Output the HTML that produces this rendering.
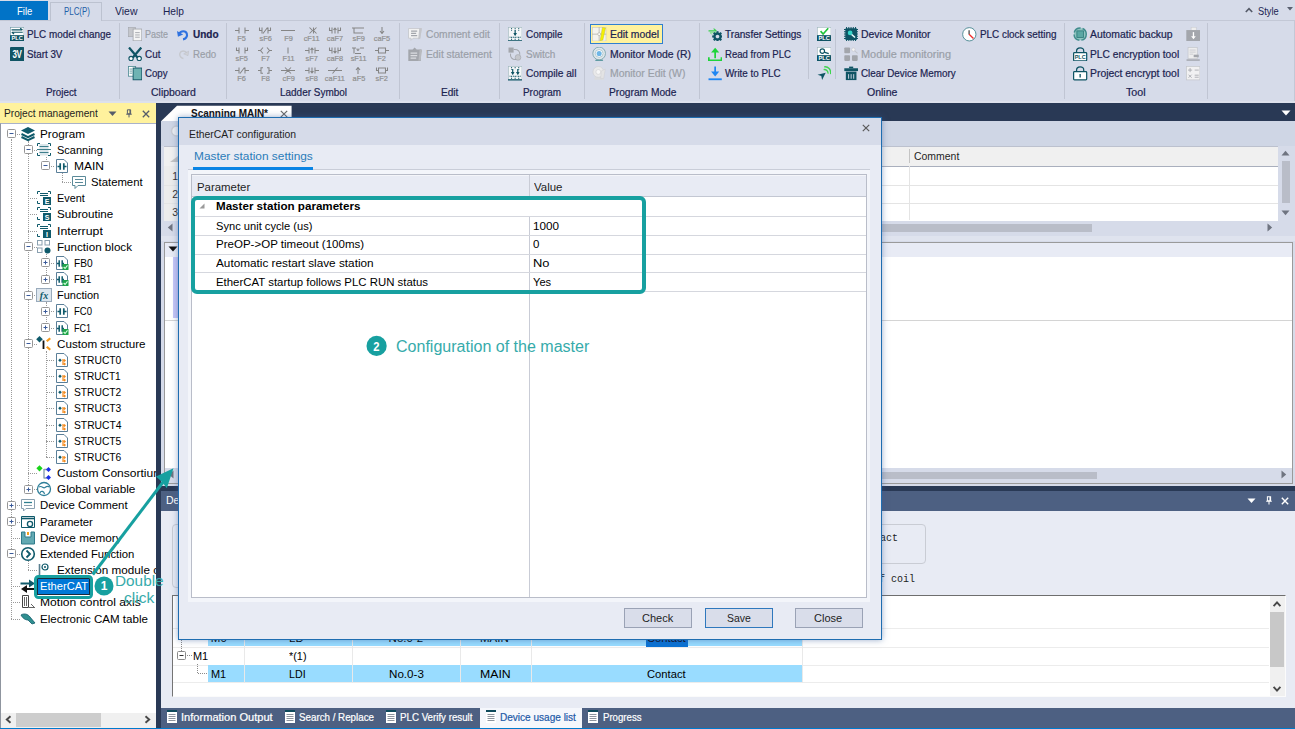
<!DOCTYPE html>
<html><head><meta charset="utf-8"><title>EtherCAT configuration</title>
<style>
html,body{margin:0;padding:0;}
body{width:1295px;height:729px;position:relative;overflow:hidden;background:#d6dbe9;font-family:'Liberation Sans', sans-serif;}
div,span.t,svg{position:absolute;box-sizing:border-box;}
span.t{white-space:pre;}
</style></head><body>
<div style="left:0px;top:0px;width:1295px;height:103px;background:#d6dbe9;"></div>
<div style="left:0px;top:20px;width:1295px;height:1px;background:#c3c8d6;"></div>
<div style="left:0px;top:1px;width:48px;height:19px;background:#0173c7;"></div>
<div style="left:50px;top:2px;width:52px;height:19px;background:#d6dbe9;border:1px solid #bcc2d0;border-bottom:none;"></div>
<span class="t" style="left:16.70px;top:5px;line-height:14px;font-family:'Liberation Sans', sans-serif;font-size:10.3px;font-weight:400;color:#ffffff;transform:scaleX(0.9281);transform-origin:0 50%;">File</span>
<span class="t" style="left:63.60px;top:5px;line-height:14px;font-family:'Liberation Sans', sans-serif;font-size:10.3px;font-weight:400;color:#1f5fa8;transform:scaleX(0.7671);transform-origin:0 50%;">PLC(P)</span>
<span class="t" style="left:115.00px;top:5px;line-height:14px;font-family:'Liberation Sans', sans-serif;font-size:10.3px;font-weight:400;color:#1b2350;transform:scaleX(1.0162);transform-origin:0 50%;">View</span>
<span class="t" style="left:163.00px;top:5px;line-height:14px;font-family:'Liberation Sans', sans-serif;font-size:10.3px;font-weight:400;color:#1b2350;transform:scaleX(0.9912);transform-origin:0 50%;">Help</span>
<span class="t" style="left:1258.40px;top:5px;line-height:14px;font-family:'Liberation Sans', sans-serif;font-size:10.3px;font-weight:400;color:#1b2350;transform:scaleX(0.8993);transform-origin:0 50%;">Style</span>
<svg style="left:1244px;top:5.5px" width="10" height="8" viewBox="0 0 10 8"><path d="M1.8 6 L5 2.6 L8.2 6" fill="none" stroke="#555a68" stroke-width="1.6"/></svg>
<svg style="left:1286.5px;top:7px" width="6" height="4" viewBox="0 0 6 4"><path d="M0 0H6L3 3.5Z" fill="#5a6070"/></svg>
<div style="left:1294px;top:20px;width:1px;height:83px;background:#c3c8d6;"></div>
<div style="left:0px;top:100.6px;width:1295px;height:2.4px;background:#dde1ec;"></div>
<div style="left:119px;top:23px;width:1px;height:76px;background:#c0c5d3;"></div>
<div style="left:226px;top:23px;width:1px;height:76px;background:#c0c5d3;"></div>
<div style="left:399px;top:23px;width:1px;height:76px;background:#c0c5d3;"></div>
<div style="left:499px;top:23px;width:1px;height:76px;background:#c0c5d3;"></div>
<div style="left:584px;top:23px;width:1px;height:76px;background:#c0c5d3;"></div>
<div style="left:699px;top:23px;width:1px;height:76px;background:#c0c5d3;"></div>
<div style="left:1064px;top:23px;width:1px;height:76px;background:#c0c5d3;"></div>
<div style="left:1207px;top:23px;width:1px;height:76px;background:#c0c5d3;"></div>
<div style="left:808px;top:29px;width:1px;height:50px;background:#c0c5d3;"></div>
<div style="left:835px;top:29px;width:1px;height:50px;background:#c0c5d3;"></div>
<span class="t" style="left:27.30px;top:28px;line-height:14px;font-family:'Liberation Sans', sans-serif;font-size:10.3px;font-weight:400;color:#1b2350;transform:scaleX(0.9590);transform-origin:0 50%;-webkit-text-stroke:0.2px;">PLC model change</span>
<span class="t" style="left:27.30px;top:48px;line-height:14px;font-family:'Liberation Sans', sans-serif;font-size:10.3px;font-weight:400;color:#1b2350;transform:scaleX(0.9515);transform-origin:0 50%;-webkit-text-stroke:0.2px;">Start 3V</span>
<span class="t" style="left:145.20px;top:28px;line-height:14px;font-family:'Liberation Sans', sans-serif;font-size:10.3px;font-weight:400;color:#9a9fa8;transform:scaleX(0.8731);transform-origin:0 50%;-webkit-text-stroke:0.2px;">Paste</span>
<span class="t" style="left:192.60px;top:28px;line-height:14px;font-family:'Liberation Sans', sans-serif;font-size:10.3px;font-weight:700;color:#1b2350;transform:scaleX(0.9729);transform-origin:0 50%;-webkit-text-stroke:0.2px;">Undo</span>
<span class="t" style="left:145.20px;top:48px;line-height:14px;font-family:'Liberation Sans', sans-serif;font-size:10.3px;font-weight:400;color:#1b2350;transform:scaleX(0.9606);transform-origin:0 50%;-webkit-text-stroke:0.2px;">Cut</span>
<span class="t" style="left:192.60px;top:48px;line-height:14px;font-family:'Liberation Sans', sans-serif;font-size:10.3px;font-weight:400;color:#9a9fa8;transform:scaleX(0.9421);transform-origin:0 50%;-webkit-text-stroke:0.2px;">Redo</span>
<span class="t" style="left:145.20px;top:67px;line-height:14px;font-family:'Liberation Sans', sans-serif;font-size:10.3px;font-weight:400;color:#1b2350;transform:scaleX(0.9398);transform-origin:0 50%;-webkit-text-stroke:0.2px;">Copy</span>
<span class="t" style="left:425.60px;top:28px;line-height:14px;font-family:'Liberation Sans', sans-serif;font-size:10.3px;font-weight:400;color:#9a9fa8;transform:scaleX(0.9952);transform-origin:0 50%;-webkit-text-stroke:0.2px;">Comment edit</span>
<span class="t" style="left:425.60px;top:48px;line-height:14px;font-family:'Liberation Sans', sans-serif;font-size:10.3px;font-weight:400;color:#9a9fa8;transform:scaleX(0.9996);transform-origin:0 50%;-webkit-text-stroke:0.2px;">Edit statement</span>
<span class="t" style="left:525.60px;top:28px;line-height:14px;font-family:'Liberation Sans', sans-serif;font-size:10.3px;font-weight:400;color:#1b2350;transform:scaleX(0.9687);transform-origin:0 50%;-webkit-text-stroke:0.2px;">Compile</span>
<span class="t" style="left:525.60px;top:48px;line-height:14px;font-family:'Liberation Sans', sans-serif;font-size:10.3px;font-weight:400;color:#9a9fa8;transform:scaleX(0.9694);transform-origin:0 50%;-webkit-text-stroke:0.2px;">Switch</span>
<span class="t" style="left:525.60px;top:67px;line-height:14px;font-family:'Liberation Sans', sans-serif;font-size:10.3px;font-weight:400;color:#1b2350;transform:scaleX(0.9894);transform-origin:0 50%;-webkit-text-stroke:0.2px;">Compile all</span>
<div style="left:590px;top:24px;width:73px;height:20px;background:#fff29d;border:1px solid #2f7fd0;"></div>
<span class="t" style="left:610.00px;top:28px;line-height:14px;font-family:'Liberation Sans', sans-serif;font-size:10.3px;font-weight:400;color:#1b2350;transform:scaleX(1.0071);transform-origin:0 50%;-webkit-text-stroke:0.2px;">Edit model</span>
<span class="t" style="left:610.00px;top:48px;line-height:14px;font-family:'Liberation Sans', sans-serif;font-size:10.3px;font-weight:400;color:#1b2350;transform:scaleX(1.0111);transform-origin:0 50%;-webkit-text-stroke:0.2px;">Monitor Mode (R)</span>
<span class="t" style="left:610.00px;top:67px;line-height:14px;font-family:'Liberation Sans', sans-serif;font-size:10.3px;font-weight:400;color:#9a9fa8;transform:scaleX(1.0136);transform-origin:0 50%;-webkit-text-stroke:0.2px;">Monitor Edit (W)</span>
<span class="t" style="left:725.00px;top:28px;line-height:14px;font-family:'Liberation Sans', sans-serif;font-size:10.3px;font-weight:400;color:#1b2350;transform:scaleX(0.9791);transform-origin:0 50%;-webkit-text-stroke:0.2px;">Transfer Settings</span>
<span class="t" style="left:725.00px;top:48px;line-height:14px;font-family:'Liberation Sans', sans-serif;font-size:10.3px;font-weight:400;color:#1b2350;transform:scaleX(0.9300);transform-origin:0 50%;-webkit-text-stroke:0.2px;">Read from PLC</span>
<span class="t" style="left:725.00px;top:67px;line-height:14px;font-family:'Liberation Sans', sans-serif;font-size:10.3px;font-weight:400;color:#1b2350;transform:scaleX(0.9555);transform-origin:0 50%;-webkit-text-stroke:0.2px;">Write to PLC</span>
<span class="t" style="left:861.00px;top:28px;line-height:14px;font-family:'Liberation Sans', sans-serif;font-size:10.3px;font-weight:400;color:#1b2350;transform:scaleX(1.0135);transform-origin:0 50%;-webkit-text-stroke:0.2px;">Device Monitor</span>
<span class="t" style="left:861.00px;top:48px;line-height:14px;font-family:'Liberation Sans', sans-serif;font-size:10.3px;font-weight:400;color:#9a9fa8;transform:scaleX(1.0623);transform-origin:0 50%;-webkit-text-stroke:0.2px;">Module monitoring</span>
<span class="t" style="left:861.00px;top:67px;line-height:14px;font-family:'Liberation Sans', sans-serif;font-size:10.3px;font-weight:400;color:#1b2350;transform:scaleX(0.9556);transform-origin:0 50%;-webkit-text-stroke:0.2px;">Clear Device Memory</span>
<span class="t" style="left:979.60px;top:28px;line-height:14px;font-family:'Liberation Sans', sans-serif;font-size:10.3px;font-weight:400;color:#1b2350;transform:scaleX(0.9603);transform-origin:0 50%;-webkit-text-stroke:0.2px;">PLC clock setting</span>
<span class="t" style="left:1090.40px;top:28px;line-height:14px;font-family:'Liberation Sans', sans-serif;font-size:10.3px;font-weight:400;color:#1b2350;transform:scaleX(1.0090);transform-origin:0 50%;-webkit-text-stroke:0.2px;">Automatic backup</span>
<span class="t" style="left:1090.40px;top:48px;line-height:14px;font-family:'Liberation Sans', sans-serif;font-size:10.3px;font-weight:400;color:#1b2350;transform:scaleX(0.9925);transform-origin:0 50%;-webkit-text-stroke:0.2px;">PLC encryption tool</span>
<span class="t" style="left:1090.40px;top:67px;line-height:14px;font-family:'Liberation Sans', sans-serif;font-size:10.3px;font-weight:400;color:#1b2350;transform:scaleX(1.0120);transform-origin:0 50%;-webkit-text-stroke:0.2px;">Project encrypt tool</span>
<span class="t" style="left:45.50px;top:86px;line-height:14px;font-family:'Liberation Sans', sans-serif;font-size:10.3px;font-weight:400;color:#1b2350;transform:scaleX(0.9544);transform-origin:0 50%;-webkit-text-stroke:0.2px;">Project</span>
<span class="t" style="left:150.60px;top:86px;line-height:14px;font-family:'Liberation Sans', sans-serif;font-size:10.3px;font-weight:400;color:#1b2350;transform:scaleX(1.0164);transform-origin:0 50%;-webkit-text-stroke:0.2px;">Clipboard</span>
<span class="t" style="left:279.60px;top:86px;line-height:14px;font-family:'Liberation Sans', sans-serif;font-size:10.3px;font-weight:400;color:#1b2350;transform:scaleX(0.9673);transform-origin:0 50%;-webkit-text-stroke:0.2px;">Ladder Symbol</span>
<span class="t" style="left:441.00px;top:86px;line-height:14px;font-family:'Liberation Sans', sans-serif;font-size:10.3px;font-weight:400;color:#1b2350;transform:scaleX(0.9803);transform-origin:0 50%;-webkit-text-stroke:0.2px;">Edit</span>
<span class="t" style="left:522.60px;top:86px;line-height:14px;font-family:'Liberation Sans', sans-serif;font-size:10.3px;font-weight:400;color:#1b2350;transform:scaleX(0.9624);transform-origin:0 50%;-webkit-text-stroke:0.2px;">Program</span>
<span class="t" style="left:608.60px;top:86px;line-height:14px;font-family:'Liberation Sans', sans-serif;font-size:10.3px;font-weight:400;color:#1b2350;transform:scaleX(0.9896);transform-origin:0 50%;-webkit-text-stroke:0.2px;">Program Mode</span>
<span class="t" style="left:866.60px;top:86px;line-height:14px;font-family:'Liberation Sans', sans-serif;font-size:10.3px;font-weight:400;color:#1b2350;transform:scaleX(1.0213);transform-origin:0 50%;-webkit-text-stroke:0.2px;">Online</span>
<span class="t" style="left:1126.00px;top:86px;line-height:14px;font-family:'Liberation Sans', sans-serif;font-size:10.3px;font-weight:400;color:#1b2350;transform:scaleX(1.0376);transform-origin:0 50%;-webkit-text-stroke:0.2px;">Tool</span>
<svg style="left:10px;top:27.15px" width="14.3" height="14.3" viewBox="0 0 14 14"><rect x="0.3" y="0.3" width="13.4" height="13.4" fill="#fff" stroke="#6d97a3" stroke-width="0.6"/><path d="M1.5 2.8H12M10 1.2L12.3 2.8 M12.5 5.2H2M4 6.8L1.7 5.2" fill="none" stroke="#0f5464" stroke-width="1.1"/><rect x="0" y="8" width="14" height="6" fill="#0f5464"/><text x="7" y="13.2" font-size="5.6" font-weight="700" fill="#fff" text-anchor="middle" font-family="Liberation Sans, sans-serif">PLC</text></svg>
<svg style="left:10px;top:46.75px" width="14.3" height="14.3" viewBox="0 0 14 14"><rect x="0" y="0" width="14" height="14" rx="1" fill="#0f5464"/><text x="8.6" y="9.6" font-size="9.8" font-weight="700" fill="#fff" text-anchor="middle" letter-spacing="-0.6" transform="scale(0.8,1.12)" font-family="Liberation Sans, sans-serif">3V</text></svg>
<svg style="left:128px;top:27.15px" width="14.3" height="14.3" viewBox="0 0 14 14"><rect x="0.5" y="0.5" width="7" height="9" fill="#c4c6cb" stroke="#a3a6ac" stroke-width="0.6"/><rect x="5" y="2" width="8.5" height="11.5" fill="#f4f4f4" stroke="#a3a6ac" stroke-width="0.8"/><path d="M7 5.5H11.5M7 7.8H11.5M7 10H11.5" stroke="#a3a6ac" stroke-width="0.9"/></svg>
<svg style="left:128px;top:46.75px" width="14.3" height="14.3" viewBox="0 0 14 14"><path d="M1 0.5L9.5 10.5M13 0.5L4.5 10.5" stroke="#0f5464" stroke-width="2.2" fill="none"/><circle cx="3" cy="11.3" r="2.1" fill="#fff" stroke="#0f5464" stroke-width="1.1"/><circle cx="11" cy="11.3" r="2.1" fill="#fff" stroke="#0f5464" stroke-width="1.1"/></svg>
<svg style="left:128px;top:66.45px" width="14.3" height="14.3" viewBox="0 0 14 14"><rect x="0.5" y="0.5" width="7" height="9.5" fill="#fff" stroke="#4d8a93" stroke-width="0.8"/><path d="M1.5 3H4M1.5 5H4M1.5 7H4" stroke="#4d8a93" stroke-width="0.8"/><rect x="5" y="2" width="8.5" height="11.5" fill="#6fb3b3" stroke="#0f5464" stroke-width="0.9"/></svg>
<svg style="left:177px;top:27.80px" width="13" height="13" viewBox="0 0 14 14"><path d="M2.2 6.3C4.5 2.5 9.5 2.8 10.6 6.2C11.6 9.3 9.2 11.8 6.5 12.2" fill="none" stroke="#2f72e0" stroke-width="2.3"/><path d="M0 3.2L1 9.4L6.6 7Z" fill="#2f72e0"/></svg>
<svg style="left:177px;top:47.90px" width="12" height="12" viewBox="0 0 14 14"><path d="M11.8 6.3C9.5 2.5 4.5 2.8 3.4 6.2C2.4 9.3 4.8 11.8 7.5 12.2" fill="none" stroke="#c6c8ce" stroke-width="1.6"/><path d="M13.8 3.6L12.8 9L7.8 6.9Z" fill="#d0d2d7" stroke="#b9bbc2" stroke-width="0.5"/></svg>
<svg style="left:408px;top:27.15px" width="14.3" height="14.3" viewBox="0 0 14 14"><path d="M0.5 1.5H13L11.5 11H5L3 13V11H0.5Z" fill="#f3f3f3" stroke="#c4c6cb" stroke-width="0.8"/><path d="M3 4H9M3 6.2H8M3 8.4H9" stroke="#a3a6ac" stroke-width="1.2"/><path d="M11 1L13.6 1.3L12 11.5L10 12Z" fill="#c4c6cb"/></svg>
<svg style="left:408px;top:46.75px" width="14.3" height="14.3" viewBox="0 0 14 14"><path d="M0.3 2.5H4.5L6.5 0.5L8.5 2.5H12.5V13.7H0.3Z" fill="#a3a6ac"/><path d="M2.5 6H9M2.5 8.5H9M2.5 11H8" stroke="#dcdde1" stroke-width="1.2"/><path d="M11.5 2L14 2.4L12.2 13L10.2 13.5Z" fill="#b8babf"/></svg>
<svg style="left:508px;top:27.15px" width="14.3" height="14.3" viewBox="0 0 14 14"><rect x="0.3" y="0.3" width="13.4" height="13" fill="#f4f6f8" stroke="#9fb7bd" stroke-width="0.6"/><path d="M0 13.6H14" stroke="#0f5464" stroke-width="1.2"/><path d="M3.5 1V4M7 1V3M10.5 1V4M3.5 10V13M7 10V13M10.5 10V13M1.5 10H12.5" stroke="#0f5464" stroke-width="0.9" stroke-dasharray="1 0.7"/><path d="M7 3V8" stroke="#0f5464" stroke-width="1.2"/><path d="M5.2 5.8H8.8L7 8.8Z" fill="#0f5464"/></svg>
<svg style="left:508px;top:66.45px" width="14.3" height="14.3" viewBox="0 0 14 14"><rect x="0.3" y="0.3" width="13.4" height="13" fill="#f4f6f8" stroke="#9fb7bd" stroke-width="0.6"/><path d="M0 13.6H14" stroke="#0f5464" stroke-width="1.2"/><path d="M3.5 1V4M7 1V3M10.5 1V4M3.5 10V13M7 10V13M10.5 10V13M1.5 10H12.5" stroke="#0f5464" stroke-width="0.9" stroke-dasharray="1 0.7"/><path d="M4.6 3V8" stroke="#0f5464" stroke-width="1.2"/><path d="M2.8 5.8H6.3999999999999995L4.6 8.8Z" fill="#0f5464"/><path d="M9.6 3V8" stroke="#0f5464" stroke-width="1.2"/><path d="M7.8 5.8H11.4L9.6 8.8Z" fill="#0f5464"/></svg>
<svg style="left:508px;top:46.75px" width="14.3" height="14.3" viewBox="0 0 14 14"><rect x="0.5" y="0.5" width="5" height="5" fill="#a3a6ac"/><circle cx="9.8" cy="10.2" r="2.8" fill="#c4c6cb" stroke="#a3a6ac" stroke-width="0.6"/><path d="M5.5 2.5C10 2 12 4.5 11.5 7.5M8 12.3C3.5 12.5 2 9.5 2.5 6.5" fill="none" stroke="#a3a6ac" stroke-width="1"/></svg>
<svg style="left:592.4px;top:27.15px" width="14.3" height="14.3" viewBox="0 0 14 14"><rect x="0.3" y="0.3" width="13.4" height="13.4" fill="#f3f3ee" stroke="#c9c9c0" stroke-width="0.6"/><path d="M0 7H14M7 0V14" stroke="#b5b5ac" stroke-width="0.8"/><circle cx="7" cy="7" r="1.4" fill="#fff" stroke="#a9a9a0" stroke-width="0.6"/><path d="M10.2 0.5L13.2 1L10.6 12.8L8 13.4Z" fill="#f5f200" stroke="#c9c21e" stroke-width="0.5"/></svg>
<svg style="left:592.4px;top:46.75px" width="14.3" height="14.3" viewBox="0 0 14 14"><path d="M3 13.6H11L9.5 11H4.5Z" fill="#5f9aa3"/><circle cx="7" cy="6.3" r="6.2" fill="#dfe6ea" stroke="#7fa7af" stroke-width="0.9"/><circle cx="7" cy="6.3" r="3.8" fill="#fff" stroke="#9db9c0" stroke-width="0.7"/><circle cx="7" cy="6.3" r="2.5" fill="#6fb6e6"/></svg>
<svg style="left:592.4px;top:66.45px" width="14.3" height="14.3" viewBox="0 0 14 14"><path d="M2 13.5H12L11 10H3Z" fill="#dadbdd"/><circle cx="6.2" cy="5.8" r="5.3" fill="#e9e9ea" stroke="#d2d3d6" stroke-width="0.8"/><circle cx="6.2" cy="5.8" r="2.4" fill="#f7f7f7" stroke="#cfd0d3" stroke-width="0.6"/><path d="M9 5L13 3L11.5 12L8.5 12.5Z" fill="#e3e3e4" stroke="#cdced1" stroke-width="0.5"/></svg>
<svg style="left:708px;top:27.15px" width="14.3" height="14.3" viewBox="0 0 14 14"><path d="M0.5 3.8H8M5.5 1.6L8.3 3.8" fill="none" stroke="#38d04a" stroke-width="1.1"/><path d="M2 5.5H9M4.3 7.5L1.8 5.5" fill="none" stroke="#7fe08a" stroke-width="0.9"/><g transform="translate(9.3,9.3)"><circle r="2.9" fill="none" stroke="#0f5464" stroke-width="2.2"/><rect x="-1" y="-5.2" width="2" height="2.4" fill="#0f5464" transform="rotate(0)"/><rect x="-1" y="-5.2" width="2" height="2.4" fill="#0f5464" transform="rotate(45)"/><rect x="-1" y="-5.2" width="2" height="2.4" fill="#0f5464" transform="rotate(90)"/><rect x="-1" y="-5.2" width="2" height="2.4" fill="#0f5464" transform="rotate(135)"/><rect x="-1" y="-5.2" width="2" height="2.4" fill="#0f5464" transform="rotate(180)"/><rect x="-1" y="-5.2" width="2" height="2.4" fill="#0f5464" transform="rotate(225)"/><rect x="-1" y="-5.2" width="2" height="2.4" fill="#0f5464" transform="rotate(270)"/><rect x="-1" y="-5.2" width="2" height="2.4" fill="#0f5464" transform="rotate(315)"/></g></svg>
<svg style="left:708px;top:46.75px" width="14.3" height="14.3" viewBox="0 0 14 14"><path d="M7 11V3" stroke="#1ed43a" stroke-width="1.7"/><path d="M3 5.5L7 0.8L11 5.5Z" fill="#1ed43a"/><path d="M0.8 10V13H13.2V10" fill="none" stroke="#1ed43a" stroke-width="1.7"/></svg>
<svg style="left:708px;top:66.45px" width="14.3" height="14.3" viewBox="0 0 14 14"><path d="M7 0.5V8" stroke="#1f86f2" stroke-width="1.7"/><path d="M3 5.5L7 10.3L11 5.5Z" fill="#1f86f2"/><path d="M0.5 13H13.5" fill="none" stroke="#1f86f2" stroke-width="1.8"/></svg>
<svg style="left:816.5px;top:27.15px" width="14.3" height="14.3" viewBox="0 0 14 14"><rect x="0.3" y="0.3" width="13.4" height="13.4" fill="#fff" stroke="#9fb7bd" stroke-width="0.6"/><path d="M3.5 4L6 6.8L11 1.2" fill="none" stroke="#1fc43a" stroke-width="1.6"/><rect x="0" y="8" width="14" height="6" fill="#0f5464"/><text x="7" y="13.2" font-size="5.6" font-weight="700" fill="#fff" text-anchor="middle" font-family="Liberation Sans, sans-serif">PLC</text></svg>
<svg style="left:816.5px;top:46.75px" width="14.3" height="14.3" viewBox="0 0 14 14"><rect x="0.3" y="0.3" width="13.4" height="13.4" fill="#fff" stroke="#9fb7bd" stroke-width="0.6"/><circle cx="5.2" cy="4" r="2.2" fill="none" stroke="#0f5464" stroke-width="1.1"/><path d="M7 5L11.5 6.5" stroke="#0f5464" stroke-width="1.3"/><rect x="0" y="8" width="14" height="6" fill="#0f5464"/><text x="7" y="13.2" font-size="5.6" font-weight="700" fill="#fff" text-anchor="middle" font-family="Liberation Sans, sans-serif">PLC</text></svg>
<svg style="left:816.5px;top:66.45px" width="14.3" height="14.3" viewBox="0 0 14 14"><path d="M0.5 8.5L8.5 6.5L5 13.8L4.2 9.8Z" fill="#0f5464"/><path d="M6.5 3.5C9 3 11 5 10.8 7.5M7 0.8C11 0.2 14 3.5 13.3 8" fill="none" stroke="#3fd44f" stroke-width="1.3"/></svg>
<svg style="left:843.6px;top:27.15px" width="14.3" height="14.3" viewBox="0 0 14 14"><path d="M2.5 0V14M0 2.5H14" stroke="#0f5464" stroke-width="1"/><path d="M4.7 0V14M0 4.7H14" stroke="#0f5464" stroke-width="1"/><path d="M6.9 0V14M0 6.9H14" stroke="#0f5464" stroke-width="1"/><path d="M9.1 0V14M0 9.1H14" stroke="#0f5464" stroke-width="1"/><path d="M11.3 0V14M0 11.3H14" stroke="#0f5464" stroke-width="1"/><rect x="1.3" y="1.3" width="11.4" height="11.4" rx="1" fill="#0f5464"/><circle cx="6" cy="5.8" r="2.3" fill="#37d6c9"/><path d="M7.5 7.3L10.8 10.3" stroke="#e8ffff" stroke-width="1.5"/></svg>
<svg style="left:843.6px;top:46.75px" width="14.3" height="14.3" viewBox="0 0 14 14"><rect x="0.3" y="0.5" width="5.6" height="5.6" rx="0.8" fill="#a3a6ac"/><rect x="0.3" y="8" width="5.6" height="5.6" rx="0.8" fill="#a3a6ac"/><rect x="7.8" y="8" width="5.6" height="5.6" rx="0.8" fill="#a3a6ac"/><circle cx="9.2" cy="2.5" r="1.7" fill="#f4f4f4" stroke="#c4c6cb" stroke-width="0.6"/><path d="M10.5 3.8L13.3 6.3" stroke="#c4c6cb" stroke-width="1"/></svg>
<svg style="left:843.6px;top:66.45px" width="14.3" height="14.3" viewBox="0 0 14 14"><path d="M5 0.6H9V2.2H5Z" fill="#0f5464"/><path d="M0.3 2.2H13.7V5H0.3Z" fill="#0f5464"/><path d="M1.8 5.5H12.2V13.8H1.8Z" fill="#0f5464"/><path d="M4.5 8V12.5M7 8V12.5M9.5 8V12.5" stroke="#d6dbe9" stroke-width="0.9"/></svg>
<svg style="left:962px;top:27.00px" width="14.6" height="14.6" viewBox="0 0 14 14"><circle cx="7" cy="7" r="6.4" fill="#fff" stroke="#4d8a93" stroke-width="0.9"/><path d="M6.8 3V7.2" stroke="#333" stroke-width="1.1"/><path d="M6.8 7L11 11" stroke="#f02a2a" stroke-width="1.3"/></svg>
<svg style="left:1073.4px;top:27.15px" width="14.3" height="14.3" viewBox="0 0 14 14"><circle cx="7" cy="7" r="6" fill="#8fc4c0" stroke="#3f8b8b" stroke-width="1.4" stroke-dasharray="8 2"/><rect x="3.8" y="3.8" width="6.4" height="6.4" fill="#5aa7a3" stroke="#2f7a7a" stroke-width="0.8"/></svg>
<svg style="left:1073.4px;top:46.75px" width="14.3" height="14.3" viewBox="0 0 14 14"><path d="M3.5 5.5V3.8C3.5 0 10.5 0 10.5 3.8V5.5" fill="none" stroke="#0f5464" stroke-width="1.2"/><rect x="0.6" y="5.5" width="12.8" height="8" rx="0.8" fill="#fff" stroke="#0f5464" stroke-width="1.2"/><text x="7" y="11.8" font-size="5.4" font-weight="700" fill="#0f5464" text-anchor="middle" font-family="Liberation Sans, sans-serif">PLC</text></svg>
<svg style="left:1073.4px;top:66.45px" width="14.3" height="14.3" viewBox="0 0 14 14"><path d="M3.5 5.5V3.8C3.5 0 10.5 0 10.5 3.8V5.5" fill="none" stroke="#0f5464" stroke-width="1.2"/><rect x="0.6" y="5.5" width="12.8" height="8" rx="0.8" fill="#fff" stroke="#0f5464" stroke-width="1.2"/><path d="M7 7.8V11.3" stroke="#0f5464" stroke-width="1.3"/></svg>
<svg style="left:1186px;top:27.15px" width="14.3" height="14.3" viewBox="0 0 14 14"><rect x="5" y="0.2" width="5" height="3" fill="#eee" stroke="#c4c6cb" stroke-width="0.5"/><rect x="0.3" y="3" width="13.4" height="10.8" fill="#a3a6ac"/><path d="M7.3 5V10" stroke="#fff" stroke-width="1.3"/><path d="M5 9L7.3 12L9.6 9Z" fill="#fff"/></svg>
<svg style="left:1186px;top:46.75px" width="14.3" height="14.3" viewBox="0 0 14 14"><rect x="2" y="0.5" width="9" height="11" fill="#ededee" stroke="#c4c6cb" stroke-width="0.7"/><path d="M3.5 3H9.5M3.5 5H9.5M3.5 7H7" stroke="#c4c6cb" stroke-width="0.8"/><rect x="7.5" y="7.5" width="5" height="2.5" fill="#a3a6ac"/><path d="M0.5 12.8H13.5" stroke="#a3a6ac" stroke-width="1.4"/></svg>
<svg style="left:1186px;top:66.45px" width="14.3" height="14.3" viewBox="0 0 14 14"><rect x="0.4" y="0.4" width="13.2" height="13.2" fill="#f1f1f2" stroke="#c4c6cb" stroke-width="0.7"/><path d="M2 4H6M4 2V6M8.5 4H12.5M2.5 8.5L5.5 11.5M5.5 8.5L2.5 11.5M8.5 9H12.5M8.5 11H12.5" stroke="#a3a6ac" stroke-width="0.8"/></svg>
<svg style="left:234.6px;top:26.7px" width="14" height="7" viewBox="0 0 14 7"><path d="M0 3.5H4M10 3.5H14M4 0.5V6.5M10 0.5V6.5" fill="none" stroke="#858585" stroke-width="1.05"/></svg>
<span class="t" style="left:236.93px;top:33px;line-height:11px;font-family:'Liberation Sans', sans-serif;font-size:8px;font-weight:400;color:#8f8f8f;-webkit-text-stroke:0.2px;transform:scaleX(0.92);">F5</span>
<svg style="left:258.2px;top:26.7px" width="14" height="7" viewBox="0 0 14 7"><path d="M1.5 0.5V3.5H4V0.5M4 0.5V6.5M10 0.5V6.5M10 3.5H12.5V0.5M5 6.5L9.5 0.5" fill="none" stroke="#858585" stroke-width="1.05"/></svg>
<span class="t" style="left:258.53px;top:33px;line-height:11px;font-family:'Liberation Sans', sans-serif;font-size:8px;font-weight:400;color:#8f8f8f;-webkit-text-stroke:0.2px;transform:scaleX(0.92);">sF6</span>
<svg style="left:281.4px;top:26.7px" width="14" height="7" viewBox="0 0 14 7"><path d="M0 3.5H14" fill="none" stroke="#858585" stroke-width="1.05"/></svg>
<span class="t" style="left:283.73px;top:33px;line-height:11px;font-family:'Liberation Sans', sans-serif;font-size:8px;font-weight:400;color:#8f8f8f;-webkit-text-stroke:0.2px;transform:scaleX(0.92);">F9</span>
<svg style="left:304.7px;top:26.7px" width="14" height="7" viewBox="0 0 14 7"><path d="M4.5 0.5L7.5 3.5L4.5 6.5M8.5 0.5V6.5M8.5 3.5L11.5 0.5M8.5 3.5L11.5 6.5" fill="none" stroke="#858585" stroke-width="1.05"/></svg>
<span class="t" style="left:303.10px;top:33px;line-height:11px;font-family:'Liberation Sans', sans-serif;font-size:8px;font-weight:400;color:#8f8f8f;-webkit-text-stroke:0.2px;transform:scaleX(0.92);">cF11</span>
<svg style="left:328.0px;top:26.7px" width="14" height="7" viewBox="0 0 14 7"><path d="M1.5 0.5V3.5H4V0.5M4 0.5V6.5M10 0.5V6.5M10 3.5H12.5V0.5M7 1V6.5M5.5 2.8L7 1L8.5 2.8" fill="none" stroke="#858585" stroke-width="1.05"/></svg>
<span class="t" style="left:326.10px;top:33px;line-height:11px;font-family:'Liberation Sans', sans-serif;font-size:8px;font-weight:400;color:#8f8f8f;-webkit-text-stroke:0.2px;transform:scaleX(0.92);">caF7</span>
<svg style="left:351.4px;top:26.7px" width="14" height="7" viewBox="0 0 14 7"><path d="M1 1H13M3 1V6H12" fill="none" stroke="#858585" stroke-width="1.05"/></svg>
<span class="t" style="left:351.73px;top:33px;line-height:11px;font-family:'Liberation Sans', sans-serif;font-size:8px;font-weight:400;color:#8f8f8f;-webkit-text-stroke:0.2px;transform:scaleX(0.92);">sF9</span>
<svg style="left:375.0px;top:26.7px" width="14" height="7" viewBox="0 0 14 7"><path d="M7 0V6M5 4L7 6.5L9 4" fill="none" stroke="#858585" stroke-width="1.05"/></svg>
<span class="t" style="left:373.10px;top:33px;line-height:11px;font-family:'Liberation Sans', sans-serif;font-size:8px;font-weight:400;color:#8f8f8f;-webkit-text-stroke:0.2px;transform:scaleX(0.92);">caF5</span>
<svg style="left:234.6px;top:46.5px" width="14" height="7" viewBox="0 0 14 7"><path d="M1.5 0.5V3.5H4V0.5M4 0.5V6.5M10 0.5V6.5M10 3.5H12.5V0.5" fill="none" stroke="#858585" stroke-width="1.05"/></svg>
<span class="t" style="left:234.93px;top:53px;line-height:11px;font-family:'Liberation Sans', sans-serif;font-size:8px;font-weight:400;color:#8f8f8f;-webkit-text-stroke:0.2px;transform:scaleX(0.92);">sF5</span>
<svg style="left:258.2px;top:46.5px" width="14" height="7" viewBox="0 0 14 7"><path d="M0 3.5H2.5M11.5 3.5H14M5 0.5L2.5 3.5L5 6.5M9 0.5L11.5 3.5L9 6.5" fill="none" stroke="#858585" stroke-width="1.05"/></svg>
<span class="t" style="left:260.53px;top:53px;line-height:11px;font-family:'Liberation Sans', sans-serif;font-size:8px;font-weight:400;color:#8f8f8f;-webkit-text-stroke:0.2px;transform:scaleX(0.92);">F7</span>
<svg style="left:281.4px;top:46.5px" width="14" height="7" viewBox="0 0 14 7"><path d="M7 0.5V6.5" fill="none" stroke="#858585" stroke-width="1.05"/></svg>
<span class="t" style="left:281.80px;top:53px;line-height:11px;font-family:'Liberation Sans', sans-serif;font-size:8px;font-weight:400;color:#8f8f8f;-webkit-text-stroke:0.2px;transform:scaleX(0.92);">F11</span>
<svg style="left:304.7px;top:46.5px" width="14" height="7" viewBox="0 0 14 7"><path d="M0 3.5H4M10 3.5H14M4 0.5V6.5M10 0.5V6.5M7 1V6.5M5.5 2.8L7 1L8.5 2.8" fill="none" stroke="#858585" stroke-width="1.05"/></svg>
<span class="t" style="left:305.03px;top:53px;line-height:11px;font-family:'Liberation Sans', sans-serif;font-size:8px;font-weight:400;color:#8f8f8f;-webkit-text-stroke:0.2px;transform:scaleX(0.92);">sF7</span>
<svg style="left:328.0px;top:46.5px" width="14" height="7" viewBox="0 0 14 7"><path d="M1.5 0.5V3.5H4V0.5M4 0.5V6.5M10 0.5V6.5M10 3.5H12.5V0.5M7 0.5V6M5.5 4.2L7 6L8.5 4.2" fill="none" stroke="#858585" stroke-width="1.05"/></svg>
<span class="t" style="left:326.10px;top:53px;line-height:11px;font-family:'Liberation Sans', sans-serif;font-size:8px;font-weight:400;color:#8f8f8f;-webkit-text-stroke:0.2px;transform:scaleX(0.92);">caF8</span>
<svg style="left:351.4px;top:46.5px" width="14" height="7" viewBox="0 0 14 7"><path d="M1 1H5M9 1H13M3 1V6.5M4 6.5H10M6 1.5C6 4 8 4 8 1.5" fill="none" stroke="#858585" stroke-width="1.05"/></svg>
<span class="t" style="left:349.80px;top:53px;line-height:11px;font-family:'Liberation Sans', sans-serif;font-size:8px;font-weight:400;color:#8f8f8f;-webkit-text-stroke:0.2px;transform:scaleX(0.92);">sF11</span>
<svg style="left:375.0px;top:46.5px" width="14" height="7" viewBox="0 0 14 7"><path d="M0 3.5H3.5M10.5 3.5H14M3.5 1H10.5V6H3.5Z" fill="none" stroke="#858585" stroke-width="1.05"/></svg>
<span class="t" style="left:377.33px;top:53px;line-height:11px;font-family:'Liberation Sans', sans-serif;font-size:8px;font-weight:400;color:#8f8f8f;-webkit-text-stroke:0.2px;transform:scaleX(0.92);">F2</span>
<svg style="left:234.6px;top:66.5px" width="14" height="7" viewBox="0 0 14 7"><path d="M0 3.5H4M10 3.5H14M4 0.5V6.5M10 0.5V6.5M5 6.5L9.5 0.5" fill="none" stroke="#858585" stroke-width="1.05"/></svg>
<span class="t" style="left:236.93px;top:73px;line-height:11px;font-family:'Liberation Sans', sans-serif;font-size:8px;font-weight:400;color:#8f8f8f;-webkit-text-stroke:0.2px;transform:scaleX(0.92);">F6</span>
<svg style="left:258.2px;top:66.5px" width="14" height="7" viewBox="0 0 14 7"><path d="M0 3.5H2.5M11.5 3.5H14M5 0.8H3V6.2H5M9 0.8H11V6.2H9" fill="none" stroke="#858585" stroke-width="1.05"/></svg>
<span class="t" style="left:260.53px;top:73px;line-height:11px;font-family:'Liberation Sans', sans-serif;font-size:8px;font-weight:400;color:#8f8f8f;-webkit-text-stroke:0.2px;transform:scaleX(0.92);">F8</span>
<svg style="left:281.4px;top:66.5px" width="14" height="7" viewBox="0 0 14 7"><path d="M0 3.5H14M4 0.5L10 6.5M10 0.5L4 6.5" fill="none" stroke="#858585" stroke-width="1.05"/></svg>
<span class="t" style="left:281.73px;top:73px;line-height:11px;font-family:'Liberation Sans', sans-serif;font-size:8px;font-weight:400;color:#8f8f8f;-webkit-text-stroke:0.2px;transform:scaleX(0.92);">cF9</span>
<svg style="left:304.7px;top:66.5px" width="14" height="7" viewBox="0 0 14 7"><path d="M0 3.5H4M10 3.5H14M4 0.5V6.5M10 0.5V6.5M7 0.5V6M5.5 4.2L7 6L8.5 4.2" fill="none" stroke="#858585" stroke-width="1.05"/></svg>
<span class="t" style="left:305.03px;top:73px;line-height:11px;font-family:'Liberation Sans', sans-serif;font-size:8px;font-weight:400;color:#8f8f8f;-webkit-text-stroke:0.2px;transform:scaleX(0.92);">sF8</span>
<svg style="left:328.0px;top:66.5px" width="14" height="7" viewBox="0 0 14 7"><path d="M0 3.5H14M4.5 6.5L9.5 0.5" fill="none" stroke="#858585" stroke-width="1.05"/></svg>
<span class="t" style="left:324.18px;top:73px;line-height:11px;font-family:'Liberation Sans', sans-serif;font-size:8px;font-weight:400;color:#8f8f8f;-webkit-text-stroke:0.2px;transform:scaleX(0.92);">caF11</span>
<svg style="left:351.4px;top:66.5px" width="14" height="7" viewBox="0 0 14 7"><path d="M7 7V1M5 3L7 0.5L9 3" fill="none" stroke="#858585" stroke-width="1.05"/></svg>
<span class="t" style="left:351.50px;top:73px;line-height:11px;font-family:'Liberation Sans', sans-serif;font-size:8px;font-weight:400;color:#8f8f8f;-webkit-text-stroke:0.2px;transform:scaleX(0.92);">aF5</span>
<svg style="left:375.0px;top:66.5px" width="14" height="7" viewBox="0 0 14 7"><path d="M1.5 0.5V3.5H3.5M12.5 0.5V3.5H10.5M3.5 1H10.5V6H3.5Z" fill="none" stroke="#858585" stroke-width="1.05"/></svg>
<span class="t" style="left:375.33px;top:73px;line-height:11px;font-family:'Liberation Sans', sans-serif;font-size:8px;font-weight:400;color:#8f8f8f;-webkit-text-stroke:0.2px;transform:scaleX(0.92);">sF2</span>
<div style="left:0px;top:103px;width:1295px;height:626px;background:#293955;"></div>
<div style="left:0px;top:103px;width:156px;height:20px;background:#fff29d;"></div>
<span class="t" style="left:3.60px;top:106px;line-height:15px;font-family:'Liberation Sans', sans-serif;font-size:10.5px;font-weight:400;color:#1e1e1e;transform:scaleX(0.9681);transform-origin:0 50%;">Project management</span>
<svg style="left:108px;top:111px" width="9" height="6" viewBox="0 0 9 6"><path d="M0.5 0.5H8.5L4.5 5Z" fill="#555c6a"/></svg>
<svg style="left:124.5px;top:108.5px" width="8" height="9.6" viewBox="0 0 10 12"><path d="M3 1H7V6H3Z M1.5 6.5H8.5 M5 6.5V10.5 M6.2 1V6" fill="none" stroke="#555c6a" stroke-width="1.25"/></svg>
<svg style="left:142px;top:110px" width="8" height="8" viewBox="0 0 8 8"><path d="M0.8 0.8L7.2 7.2M7.2 0.8L0.8 7.2" stroke="#555c6a" stroke-width="1.3"/></svg>
<div style="left:0px;top:123px;width:156px;height:605px;background:#ffffff;border-left:1.5px solid #8f959f;border-top:1px solid #a9b2c9;"></div>
<div style="left:1px;top:124px;width:155px;height:588px;overflow:hidden;">
<div style="left:10px;top:14.60px;width:0;height:480.04px;border-left:1px dotted #9a9a9a;"></div>
<div style="left:27px;top:16.60px;width:0;height:348.70px;border-left:1px dotted #9a9a9a;"></div>
<div style="left:44.5px;top:32.77px;width:0;height:9.17px;border-left:1px dotted #9a9a9a;"></div>
<div style="left:61px;top:48.94px;width:0;height:9.17px;border-left:1px dotted #9a9a9a;"></div>
<div style="left:44.5px;top:129.78px;width:0;height:25.34px;border-left:1px dotted #9a9a9a;"></div>
<div style="left:44.5px;top:178.28px;width:0;height:25.34px;border-left:1px dotted #9a9a9a;"></div>
<div style="left:44.5px;top:226.78px;width:0;height:106.18px;border-left:1px dotted #9a9a9a;"></div>
<div style="left:27px;top:436.97px;width:0;height:9.17px;border-left:1px dotted #9a9a9a;"></div>
<div style="left:10.00px;top:9.60px;width:9.00px;height:0;border-top:1px dotted #9a9a9a;"></div>
<svg style="left:5.50px;top:5.10px" width="9" height="9" viewBox="0 0 9 9"><rect x="0.5" y="0.5" width="8" height="8" rx="1" fill="#ffffff" stroke="#969696"/><path d="M2.5 4.5H6.5" stroke="#3a5a9a" stroke-width="1"/></svg>
<div style="left:27.00px;top:25.77px;width:9.00px;height:0;border-top:1px dotted #9a9a9a;"></div>
<svg style="left:22.50px;top:21.27px" width="9" height="9" viewBox="0 0 9 9"><rect x="0.5" y="0.5" width="8" height="8" rx="1" fill="#ffffff" stroke="#969696"/><path d="M2.5 4.5H6.5" stroke="#3a5a9a" stroke-width="1"/></svg>
<div style="left:44.50px;top:41.94px;width:8.50px;height:0;border-top:1px dotted #9a9a9a;"></div>
<svg style="left:40.00px;top:37.44px" width="9" height="9" viewBox="0 0 9 9"><rect x="0.5" y="0.5" width="8" height="8" rx="1" fill="#ffffff" stroke="#969696"/><path d="M2.5 4.5H6.5" stroke="#3a5a9a" stroke-width="1"/></svg>
<div style="left:61.00px;top:58.10px;width:9.00px;height:0;border-top:1px dotted #9a9a9a;"></div>
<div style="left:27.00px;top:74.27px;width:9.00px;height:0;border-top:1px dotted #9a9a9a;"></div>
<div style="left:27.00px;top:90.44px;width:9.00px;height:0;border-top:1px dotted #9a9a9a;"></div>
<div style="left:27.00px;top:106.61px;width:9.00px;height:0;border-top:1px dotted #9a9a9a;"></div>
<div style="left:27.00px;top:122.78px;width:9.00px;height:0;border-top:1px dotted #9a9a9a;"></div>
<svg style="left:22.50px;top:118.28px" width="9" height="9" viewBox="0 0 9 9"><rect x="0.5" y="0.5" width="8" height="8" rx="1" fill="#ffffff" stroke="#969696"/><path d="M2.5 4.5H6.5" stroke="#3a5a9a" stroke-width="1"/></svg>
<div style="left:44.50px;top:138.94px;width:8.50px;height:0;border-top:1px dotted #9a9a9a;"></div>
<svg style="left:40.00px;top:134.44px" width="9" height="9" viewBox="0 0 9 9"><rect x="0.5" y="0.5" width="8" height="8" rx="1" fill="#ffffff" stroke="#969696"/><path d="M2.5 4.5H6.5M4.5 2.5V6.5" stroke="#3a5a9a" stroke-width="1"/></svg>
<div style="left:44.50px;top:155.11px;width:8.50px;height:0;border-top:1px dotted #9a9a9a;"></div>
<svg style="left:40.00px;top:150.61px" width="9" height="9" viewBox="0 0 9 9"><rect x="0.5" y="0.5" width="8" height="8" rx="1" fill="#ffffff" stroke="#969696"/><path d="M2.5 4.5H6.5M4.5 2.5V6.5" stroke="#3a5a9a" stroke-width="1"/></svg>
<div style="left:27.00px;top:171.28px;width:9.00px;height:0;border-top:1px dotted #9a9a9a;"></div>
<svg style="left:22.50px;top:166.78px" width="9" height="9" viewBox="0 0 9 9"><rect x="0.5" y="0.5" width="8" height="8" rx="1" fill="#ffffff" stroke="#969696"/><path d="M2.5 4.5H6.5" stroke="#3a5a9a" stroke-width="1"/></svg>
<div style="left:44.50px;top:187.45px;width:8.50px;height:0;border-top:1px dotted #9a9a9a;"></div>
<svg style="left:40.00px;top:182.95px" width="9" height="9" viewBox="0 0 9 9"><rect x="0.5" y="0.5" width="8" height="8" rx="1" fill="#ffffff" stroke="#969696"/><path d="M2.5 4.5H6.5M4.5 2.5V6.5" stroke="#3a5a9a" stroke-width="1"/></svg>
<div style="left:44.50px;top:203.62px;width:8.50px;height:0;border-top:1px dotted #9a9a9a;"></div>
<svg style="left:40.00px;top:199.12px" width="9" height="9" viewBox="0 0 9 9"><rect x="0.5" y="0.5" width="8" height="8" rx="1" fill="#ffffff" stroke="#969696"/><path d="M2.5 4.5H6.5M4.5 2.5V6.5" stroke="#3a5a9a" stroke-width="1"/></svg>
<div style="left:27.00px;top:219.78px;width:9.00px;height:0;border-top:1px dotted #9a9a9a;"></div>
<svg style="left:22.50px;top:215.28px" width="9" height="9" viewBox="0 0 9 9"><rect x="0.5" y="0.5" width="8" height="8" rx="1" fill="#ffffff" stroke="#969696"/><path d="M2.5 4.5H6.5" stroke="#3a5a9a" stroke-width="1"/></svg>
<div style="left:44.50px;top:235.95px;width:8.50px;height:0;border-top:1px dotted #9a9a9a;"></div>
<div style="left:44.50px;top:252.12px;width:8.50px;height:0;border-top:1px dotted #9a9a9a;"></div>
<div style="left:44.50px;top:268.29px;width:8.50px;height:0;border-top:1px dotted #9a9a9a;"></div>
<div style="left:44.50px;top:284.46px;width:8.50px;height:0;border-top:1px dotted #9a9a9a;"></div>
<div style="left:44.50px;top:300.62px;width:8.50px;height:0;border-top:1px dotted #9a9a9a;"></div>
<div style="left:44.50px;top:316.79px;width:8.50px;height:0;border-top:1px dotted #9a9a9a;"></div>
<div style="left:44.50px;top:332.96px;width:8.50px;height:0;border-top:1px dotted #9a9a9a;"></div>
<div style="left:27.00px;top:349.13px;width:9.00px;height:0;border-top:1px dotted #9a9a9a;"></div>
<div style="left:27.00px;top:365.30px;width:9.00px;height:0;border-top:1px dotted #9a9a9a;"></div>
<svg style="left:22.50px;top:360.80px" width="9" height="9" viewBox="0 0 9 9"><rect x="0.5" y="0.5" width="8" height="8" rx="1" fill="#ffffff" stroke="#969696"/><path d="M2.5 4.5H6.5M4.5 2.5V6.5" stroke="#3a5a9a" stroke-width="1"/></svg>
<div style="left:10.00px;top:381.46px;width:9.00px;height:0;border-top:1px dotted #9a9a9a;"></div>
<svg style="left:5.50px;top:376.96px" width="9" height="9" viewBox="0 0 9 9"><rect x="0.5" y="0.5" width="8" height="8" rx="1" fill="#ffffff" stroke="#969696"/><path d="M2.5 4.5H6.5M4.5 2.5V6.5" stroke="#3a5a9a" stroke-width="1"/></svg>
<div style="left:10.00px;top:397.63px;width:9.00px;height:0;border-top:1px dotted #9a9a9a;"></div>
<svg style="left:5.50px;top:393.13px" width="9" height="9" viewBox="0 0 9 9"><rect x="0.5" y="0.5" width="8" height="8" rx="1" fill="#ffffff" stroke="#969696"/><path d="M2.5 4.5H6.5M4.5 2.5V6.5" stroke="#3a5a9a" stroke-width="1"/></svg>
<div style="left:10.00px;top:413.80px;width:9.00px;height:0;border-top:1px dotted #9a9a9a;"></div>
<div style="left:10.00px;top:429.97px;width:9.00px;height:0;border-top:1px dotted #9a9a9a;"></div>
<svg style="left:5.50px;top:425.47px" width="9" height="9" viewBox="0 0 9 9"><rect x="0.5" y="0.5" width="8" height="8" rx="1" fill="#ffffff" stroke="#969696"/><path d="M2.5 4.5H6.5" stroke="#3a5a9a" stroke-width="1"/></svg>
<div style="left:27.00px;top:446.14px;width:9.00px;height:0;border-top:1px dotted #9a9a9a;"></div>
<div style="left:10.00px;top:462.30px;width:9.00px;height:0;border-top:1px dotted #9a9a9a;"></div>
<div style="left:10.00px;top:478.47px;width:9.00px;height:0;border-top:1px dotted #9a9a9a;"></div>
<div style="left:10.00px;top:494.64px;width:9.00px;height:0;border-top:1px dotted #9a9a9a;"></div>
<svg style="left:18.50px;top:1.60px" width="16" height="16" viewBox="0 0 16 16"><path d="M8 1L15 4.5L8 8L1 4.5Z" fill="#0f5a6b"/><path d="M1.5 8L8 11.2L14.5 8M1.5 11L8 14.2L14.5 11" fill="none" stroke="#0f5a6b" stroke-width="2.1"/></svg>
<svg style="left:35.30px;top:17.77px" width="16" height="16" viewBox="0 0 16 16"><rect x="3.5" y="2" width="9" height="11.5" fill="#dbe6ea"/><path d="M1.5 4V1.5H4M12 1.5H14.5V4M14.5 11V13.5H12M4 13.5H1.5V11" fill="none" stroke="#0f5a6b" stroke-width="1"/><path d="M3.5 4.5H12.5M1 7.5H15M3.5 10.5H12.5" stroke="#3f7f8c" stroke-width="1.2"/></svg>
<svg style="left:52.50px;top:33.94px" width="16" height="16" viewBox="0 0 16 16"><path d="M2.5 1.5H10L13.5 5V14.5H2.5Z" fill="#ffffff" stroke="#5a7f99" stroke-width="1"/><path d="M3.5 8.5H6.2M9.8 8.5H12.5M6.2 5.2V11.8M9.8 5.2V11.8" stroke="#0f5a6b" stroke-width="1.7"/></svg>
<svg style="left:69.60px;top:50.10px" width="16" height="16" viewBox="0 0 16 16"><path d="M1.5 2.5H14.5V11.5H7L4 14.5V11.5H1.5Z" fill="#fff" stroke="#5a8a99" stroke-width="1"/><path d="M4 5.5H12M4 8.5H12" stroke="#5a8a99" stroke-width="1"/></svg>
<svg style="left:35.30px;top:66.27px" width="16" height="16" viewBox="0 0 16 16"><path d="M1.5 4V1.5H4M12 1.5H14.5V4M14.5 11V13.5H12M4 13.5H1.5V11" fill="none" stroke="#0f5a6b" stroke-width="1"/><path d="M4 3.5H12M4 5.5H12" stroke="#0f5a6b" stroke-width="1"/><rect x="7" y="7" width="8" height="8" fill="#0f5a6b"/><text x="11" y="13.8" font-size="7" font-weight="700" fill="#fff" text-anchor="middle" font-family="Liberation Sans, sans-serif">E</text></svg>
<svg style="left:35.30px;top:82.44px" width="16" height="16" viewBox="0 0 16 16"><path d="M1.5 4V1.5H4M12 1.5H14.5V4M14.5 11V13.5H12M4 13.5H1.5V11" fill="none" stroke="#0f5a6b" stroke-width="1"/><path d="M4 3.5H12M4 5.5H12" stroke="#0f5a6b" stroke-width="1"/><rect x="7" y="7" width="8" height="8" fill="#0f5a6b"/><text x="11" y="13.8" font-size="7" font-weight="700" fill="#fff" text-anchor="middle" font-family="Liberation Sans, sans-serif">S</text></svg>
<svg style="left:35.30px;top:98.61px" width="16" height="16" viewBox="0 0 16 16"><path d="M1.5 4V1.5H4M12 1.5H14.5V4M14.5 11V13.5H12M4 13.5H1.5V11" fill="none" stroke="#0f5a6b" stroke-width="1"/><path d="M4 3.5H12M4 5.5H12" stroke="#0f5a6b" stroke-width="1"/><rect x="7" y="7" width="8" height="8" fill="#0f5a6b"/><text x="11" y="13.8" font-size="7" font-weight="700" fill="#fff" text-anchor="middle" font-family="Liberation Sans, sans-serif">I</text></svg>
<svg style="left:35.30px;top:114.78px" width="16" height="16" viewBox="0 0 16 16"><rect x="1.5" y="1.5" width="4.5" height="4.5" fill="none" stroke="#8aa0b0"/><rect x="9" y="1.5" width="4.5" height="4.5" fill="none" stroke="#8aa0b0"/><rect x="1.5" y="9" width="4.5" height="4.5" fill="none" stroke="#8aa0b0"/><circle cx="11.5" cy="11.5" r="3" fill="#0f5a6b"/></svg>
<svg style="left:52.50px;top:130.94px" width="16" height="16" viewBox="0 0 16 16"><path d="M2.5 1.5H10L13.5 5V14.5H2.5Z" fill="#ffffff" stroke="#5a7f99" stroke-width="1"/><path d="M3 8.5H5.2M8.2 8.5H10M5.2 5.2V11.8M8.2 5.2V11.8" stroke="#0f5a6b" stroke-width="1.5"/><rect x="8.5" y="9" width="6" height="6" fill="#1fa34a"/><path d="M9.7 12L11.1 13.5L13.5 10.4" fill="none" stroke="#d8ffe0" stroke-width="1.1"/></svg>
<svg style="left:52.50px;top:147.11px" width="16" height="16" viewBox="0 0 16 16"><path d="M2.5 1.5H10L13.5 5V14.5H2.5Z" fill="#ffffff" stroke="#5a7f99" stroke-width="1"/><path d="M3 8.5H5.2M8.2 8.5H10M5.2 5.2V11.8M8.2 5.2V11.8" stroke="#0f5a6b" stroke-width="1.5"/><rect x="8.5" y="9" width="6" height="6" fill="#1fa34a"/><path d="M9.7 12L11.1 13.5L13.5 10.4" fill="none" stroke="#d8ffe0" stroke-width="1.1"/></svg>
<svg style="left:35.30px;top:163.28px" width="16" height="16" viewBox="0 0 16 16"><rect x="0.5" y="1.5" width="15" height="13" fill="#dde6ee" stroke="#9ab"/><text x="8" y="12" font-size="10" font-style="italic" font-weight="700" fill="#0f5a6b" text-anchor="middle" font-family="Liberation Serif, serif">fx</text></svg>
<svg style="left:52.50px;top:179.45px" width="16" height="16" viewBox="0 0 16 16"><path d="M2.5 1.5H10L13.5 5V14.5H2.5Z" fill="#ffffff" stroke="#5a7f99" stroke-width="1"/><path d="M3.5 8.5H6.2M9.8 8.5H12.5M6.2 5.2V11.8M9.8 5.2V11.8" stroke="#0f5a6b" stroke-width="1.7"/></svg>
<svg style="left:52.50px;top:195.62px" width="16" height="16" viewBox="0 0 16 16"><path d="M2.5 1.5H10L13.5 5V14.5H2.5Z" fill="#ffffff" stroke="#5a7f99" stroke-width="1"/><path d="M3 8.5H5.2M8.2 8.5H10M5.2 5.2V11.8M8.2 5.2V11.8" stroke="#0f5a6b" stroke-width="1.5"/><rect x="8.5" y="9" width="6" height="6" fill="#1fa34a"/><path d="M9.7 12L11.1 13.5L13.5 10.4" fill="none" stroke="#d8ffe0" stroke-width="1.1"/></svg>
<svg style="left:35.30px;top:211.78px" width="16" height="16" viewBox="0 0 16 16"><path d="M7.5 4.5V13" stroke="#111" stroke-width="1.8"/><path d="M3.5 0L6.8 3.3L3.5 6.6L0.2 3.3Z" fill="#0f5a6b"/><path d="M10 4.5L13.5 1.5L15 3L11.5 6Z M10 11.5L13.5 14.5L15 13L11.5 10Z" fill="#f59a1e"/></svg>
<svg style="left:52.50px;top:227.95px" width="16" height="16" viewBox="0 0 16 16"><path d="M2.5 1.5H10L13.5 5V14.5H2.5Z" fill="#ffffff" stroke="#5a7f99" stroke-width="1"/><path d="M9 7V13" stroke="#f28a1e" stroke-width="1.2"/><path d="M6 6.5L7.8 8.3L6 10L4.2 8.3Z" fill="#0f5a6b"/><path d="M10.5 7L12 8.5L10.5 10L9 8.5Z M10.5 10.5L12 12L10.5 13.5L9 12Z" fill="#f28a1e"/></svg>
<svg style="left:52.50px;top:244.12px" width="16" height="16" viewBox="0 0 16 16"><path d="M2.5 1.5H10L13.5 5V14.5H2.5Z" fill="#ffffff" stroke="#5a7f99" stroke-width="1"/><path d="M9 7V13" stroke="#f28a1e" stroke-width="1.2"/><path d="M6 6.5L7.8 8.3L6 10L4.2 8.3Z" fill="#0f5a6b"/><path d="M10.5 7L12 8.5L10.5 10L9 8.5Z M10.5 10.5L12 12L10.5 13.5L9 12Z" fill="#f28a1e"/></svg>
<svg style="left:52.50px;top:260.29px" width="16" height="16" viewBox="0 0 16 16"><path d="M2.5 1.5H10L13.5 5V14.5H2.5Z" fill="#ffffff" stroke="#5a7f99" stroke-width="1"/><path d="M9 7V13" stroke="#f28a1e" stroke-width="1.2"/><path d="M6 6.5L7.8 8.3L6 10L4.2 8.3Z" fill="#0f5a6b"/><path d="M10.5 7L12 8.5L10.5 10L9 8.5Z M10.5 10.5L12 12L10.5 13.5L9 12Z" fill="#f28a1e"/></svg>
<svg style="left:52.50px;top:276.46px" width="16" height="16" viewBox="0 0 16 16"><path d="M2.5 1.5H10L13.5 5V14.5H2.5Z" fill="#ffffff" stroke="#5a7f99" stroke-width="1"/><path d="M9 7V13" stroke="#f28a1e" stroke-width="1.2"/><path d="M6 6.5L7.8 8.3L6 10L4.2 8.3Z" fill="#0f5a6b"/><path d="M10.5 7L12 8.5L10.5 10L9 8.5Z M10.5 10.5L12 12L10.5 13.5L9 12Z" fill="#f28a1e"/></svg>
<svg style="left:52.50px;top:292.62px" width="16" height="16" viewBox="0 0 16 16"><path d="M2.5 1.5H10L13.5 5V14.5H2.5Z" fill="#ffffff" stroke="#5a7f99" stroke-width="1"/><path d="M9 7V13" stroke="#f28a1e" stroke-width="1.2"/><path d="M6 6.5L7.8 8.3L6 10L4.2 8.3Z" fill="#0f5a6b"/><path d="M10.5 7L12 8.5L10.5 10L9 8.5Z M10.5 10.5L12 12L10.5 13.5L9 12Z" fill="#f28a1e"/></svg>
<svg style="left:52.50px;top:308.79px" width="16" height="16" viewBox="0 0 16 16"><path d="M2.5 1.5H10L13.5 5V14.5H2.5Z" fill="#ffffff" stroke="#5a7f99" stroke-width="1"/><path d="M9 7V13" stroke="#f28a1e" stroke-width="1.2"/><path d="M6 6.5L7.8 8.3L6 10L4.2 8.3Z" fill="#0f5a6b"/><path d="M10.5 7L12 8.5L10.5 10L9 8.5Z M10.5 10.5L12 12L10.5 13.5L9 12Z" fill="#f28a1e"/></svg>
<svg style="left:52.50px;top:324.96px" width="16" height="16" viewBox="0 0 16 16"><path d="M2.5 1.5H10L13.5 5V14.5H2.5Z" fill="#ffffff" stroke="#5a7f99" stroke-width="1"/><path d="M9 7V13" stroke="#f28a1e" stroke-width="1.2"/><path d="M6 6.5L7.8 8.3L6 10L4.2 8.3Z" fill="#0f5a6b"/><path d="M10.5 7L12 8.5L10.5 10L9 8.5Z M10.5 10.5L12 12L10.5 13.5L9 12Z" fill="#f28a1e"/></svg>
<svg style="left:35.30px;top:341.13px" width="16" height="16" viewBox="0 0 16 16"><path d="M8 4V13.5M8 4.5H11M8 13H11" fill="none" stroke="#8aa0b0" stroke-width="1.4"/><path d="M3.5 0.2L6.6 3.3L3.5 6.4L0.4 3.3Z" fill="#19d419"/><path d="M12.5 2L15 4.5L12.5 7L10 4.5Z M12.5 10L15 12.5L12.5 15L10 12.5Z" fill="#1a2fe8"/></svg>
<svg style="left:35.30px;top:357.30px" width="16" height="16" viewBox="0 0 16 16"><circle cx="8" cy="8" r="6.5" fill="#fff" stroke="#2f7f99" stroke-width="1.3"/><path d="M3 6C6 4 7 8 9 6.5S12 5 13.5 6M4 12C5 9 8 10.5 8.5 13" fill="none" stroke="#2f7f99" stroke-width="1.2"/></svg>
<svg style="left:18.50px;top:373.46px" width="16" height="16" viewBox="0 0 16 16"><path d="M1.5 2.5H14.5V11.5H6L3.5 14V11.5H1.5Z" fill="#fff" stroke="#8aa0b0"/><path d="M4 5.5H12" stroke="#2f7f8f" stroke-width="1.3"/><path d="M4 8.5H12" stroke="#8aa0b0" stroke-width="1"/></svg>
<svg style="left:18.50px;top:389.63px" width="16" height="16" viewBox="0 0 16 16"><path d="M1.5 2.5H14.5V13.5H1.5Z" fill="#fff" stroke="#0f5a6b"/><path d="M1.5 4.5H14.5" stroke="#0f5a6b" stroke-width="1.6"/><circle cx="10" cy="10" r="2.6" fill="none" stroke="#0f5a6b" stroke-width="1.3"/></svg>
<svg style="left:18.50px;top:405.80px" width="16" height="16" viewBox="0 0 16 16"><path d="M1.5 2V14H14.5V2H11V7H5V2Z" fill="#62a9b2" stroke="#2f7a8a"/><rect x="7" y="2" width="2" height="3" fill="#f2a01e"/></svg>
<svg style="left:18.50px;top:421.97px" width="16" height="16" viewBox="0 0 16 16"><circle cx="8" cy="8" r="6.3" fill="#fff" stroke="#0f5a6b" stroke-width="1.6"/><path d="M6.5 4.5L10 8L6.5 11.5" fill="none" stroke="#0f5a6b" stroke-width="1.8"/></svg>
<svg style="left:35.30px;top:438.14px" width="16" height="16" viewBox="0 0 16 16"><path d="M3.5 2V14" stroke="#5a7f8f" stroke-width="1.6"/><circle cx="9" cy="5" r="3" fill="#fff" stroke="#0f5a6b" stroke-width="1.2"/><circle cx="9" cy="5" r="1" fill="#0f5a6b"/></svg>
<svg style="left:18.50px;top:454.30px" width="16" height="16" viewBox="0 0 16 16"><path d="M0.5 5.5H10" stroke="#0f5a6b" stroke-width="2"/><path d="M9 1.5L15 5.5L9 9.5Z" fill="#0f5a6b"/><path d="M15.5 11H6" stroke="#111" stroke-width="2"/><path d="M7 7L1 11L7 15Z" fill="#111"/></svg>
<svg style="left:18.50px;top:470.47px" width="16" height="16" viewBox="0 0 16 16"><path d="M2.5 1.5V13.5H8.5V1.5Z" fill="#fff" stroke="#444" stroke-width="1"/><path d="M4.5 3V12M6.5 3V12" stroke="#666" stroke-width="1"/><path d="M9 13.5H15M11 10L14 13" stroke="#666" stroke-width="1"/></svg>
<svg style="left:18.50px;top:486.64px" width="16" height="16" viewBox="0 0 16 16"><path d="M1 4C4 2 8 3 10 6L15 12L12 13L8 9C6 9 3 8 1 4Z" fill="#2f8f8f" stroke="#0f5a6b" stroke-width="0.8"/></svg>
<!--treetext-->
<span class="t" style="left:39.00px;top:3px;line-height:15px;font-family:'Liberation Sans', sans-serif;font-size:11px;font-weight:400;color:#000000;transform:scaleX(1.0667);transform-origin:0 50%;">Program</span>
<span class="t" style="left:55.80px;top:19px;line-height:15px;font-family:'Liberation Sans', sans-serif;font-size:11px;font-weight:400;color:#000000;transform:scaleX(0.9984);transform-origin:0 50%;">Scanning</span>
<span class="t" style="left:73.00px;top:35px;line-height:15px;font-family:'Liberation Sans', sans-serif;font-size:11px;font-weight:400;color:#000000;transform:scaleX(1.0909);transform-origin:0 50%;">MAIN</span>
<span class="t" style="left:90.10px;top:51px;line-height:15px;font-family:'Liberation Sans', sans-serif;font-size:11px;font-weight:400;color:#000000;transform:scaleX(1.0291);transform-origin:0 50%;">Statement</span>
<span class="t" style="left:55.80px;top:67px;line-height:15px;font-family:'Liberation Sans', sans-serif;font-size:11px;font-weight:400;color:#000000;transform:scaleX(0.9843);transform-origin:0 50%;">Event</span>
<span class="t" style="left:55.80px;top:83px;line-height:15px;font-family:'Liberation Sans', sans-serif;font-size:11px;font-weight:400;color:#000000;transform:scaleX(1.0579);transform-origin:0 50%;">Subroutine</span>
<span class="t" style="left:55.80px;top:100px;line-height:15px;font-family:'Liberation Sans', sans-serif;font-size:11px;font-weight:400;color:#000000;transform:scaleX(1.1179);transform-origin:0 50%;">Interrupt</span>
<span class="t" style="left:55.80px;top:116px;line-height:15px;font-family:'Liberation Sans', sans-serif;font-size:11px;font-weight:400;color:#000000;transform:scaleX(1.0573);transform-origin:0 50%;">Function block</span>
<span class="t" style="left:73.00px;top:132px;line-height:15px;font-family:'Liberation Sans', sans-serif;font-size:11px;font-weight:400;color:#000000;transform:scaleX(0.9214);transform-origin:0 50%;">FB0</span>
<span class="t" style="left:73.00px;top:148px;line-height:15px;font-family:'Liberation Sans', sans-serif;font-size:11px;font-weight:400;color:#000000;transform:scaleX(0.8619);transform-origin:0 50%;">FB1</span>
<span class="t" style="left:55.80px;top:164px;line-height:15px;font-family:'Liberation Sans', sans-serif;font-size:11px;font-weight:400;color:#000000;transform:scaleX(0.9999);transform-origin:0 50%;">Function</span>
<span class="t" style="left:73.00px;top:180px;line-height:15px;font-family:'Liberation Sans', sans-serif;font-size:11px;font-weight:400;color:#000000;transform:scaleX(0.8662);transform-origin:0 50%;">FC0</span>
<span class="t" style="left:73.00px;top:197px;line-height:15px;font-family:'Liberation Sans', sans-serif;font-size:11px;font-weight:400;color:#000000;transform:scaleX(0.8229);transform-origin:0 50%;">FC1</span>
<span class="t" style="left:55.80px;top:213px;line-height:15px;font-family:'Liberation Sans', sans-serif;font-size:11px;font-weight:400;color:#000000;transform:scaleX(1.0579);transform-origin:0 50%;">Custom structure</span>
<span class="t" style="left:73.00px;top:229px;line-height:15px;font-family:'Liberation Sans', sans-serif;font-size:11px;font-weight:400;color:#000000;transform:scaleX(0.9323);transform-origin:0 50%;">STRUCT0</span>
<span class="t" style="left:73.00px;top:245px;line-height:15px;font-family:'Liberation Sans', sans-serif;font-size:11px;font-weight:400;color:#000000;transform:scaleX(0.9205);transform-origin:0 50%;">STRUCT1</span>
<span class="t" style="left:73.00px;top:261px;line-height:15px;font-family:'Liberation Sans', sans-serif;font-size:11px;font-weight:400;color:#000000;transform:scaleX(0.9323);transform-origin:0 50%;">STRUCT2</span>
<span class="t" style="left:73.00px;top:277px;line-height:15px;font-family:'Liberation Sans', sans-serif;font-size:11px;font-weight:400;color:#000000;transform:scaleX(0.9323);transform-origin:0 50%;">STRUCT3</span>
<span class="t" style="left:73.00px;top:294px;line-height:15px;font-family:'Liberation Sans', sans-serif;font-size:11px;font-weight:400;color:#000000;transform:scaleX(0.9362);transform-origin:0 50%;">STRUCT4</span>
<span class="t" style="left:73.00px;top:310px;line-height:15px;font-family:'Liberation Sans', sans-serif;font-size:11px;font-weight:400;color:#000000;transform:scaleX(0.9323);transform-origin:0 50%;">STRUCT5</span>
<span class="t" style="left:73.00px;top:326px;line-height:15px;font-family:'Liberation Sans', sans-serif;font-size:11px;font-weight:400;color:#000000;transform:scaleX(0.9323);transform-origin:0 50%;">STRUCT6</span>
<span class="t" style="left:55.80px;top:342px;line-height:15px;font-family:'Liberation Sans', sans-serif;font-size:11px;font-weight:400;color:#000000;transform:scaleX(1.0926);transform-origin:0 50%;">Custom Consortium</span>
<span class="t" style="left:55.80px;top:358px;line-height:15px;font-family:'Liberation Sans', sans-serif;font-size:11px;font-weight:400;color:#000000;transform:scaleX(1.0671);transform-origin:0 50%;">Global variable</span>
<span class="t" style="left:39.00px;top:374px;line-height:15px;font-family:'Liberation Sans', sans-serif;font-size:11px;font-weight:400;color:#000000;transform:scaleX(1.0384);transform-origin:0 50%;">Device Comment</span>
<span class="t" style="left:39.00px;top:391px;line-height:15px;font-family:'Liberation Sans', sans-serif;font-size:11px;font-weight:400;color:#000000;transform:scaleX(1.0300);transform-origin:0 50%;">Parameter</span>
<span class="t" style="left:39.00px;top:407px;line-height:15px;font-family:'Liberation Sans', sans-serif;font-size:11px;font-weight:400;color:#000000;transform:scaleX(1.0667);transform-origin:0 50%;">Device memory</span>
<span class="t" style="left:39.00px;top:423px;line-height:15px;font-family:'Liberation Sans', sans-serif;font-size:11px;font-weight:400;color:#000000;transform:scaleX(1.0280);transform-origin:0 50%;">Extended Function</span>
<span class="t" style="left:55.80px;top:439px;line-height:15px;font-family:'Liberation Sans', sans-serif;font-size:11px;font-weight:400;color:#000000;transform:scaleX(1.0626);transform-origin:0 50%;">Extension module configuration</span>
<div style="left:37.3px;top:454.5px;width:50.4px;height:15.3px;background:#0078d7;outline:1px solid #1b2a3a;"></div>
<span class="t" style="left:39.00px;top:455px;line-height:15px;font-family:'Liberation Sans', sans-serif;font-size:11px;font-weight:400;color:#ffffff;transform:scaleX(1.0130);transform-origin:0 50%;">EtherCAT</span>
<span class="t" style="left:39.00px;top:471px;line-height:15px;font-family:'Liberation Sans', sans-serif;font-size:11px;font-weight:400;color:#000000;transform:scaleX(1.0990);transform-origin:0 50%;">Motion control axis</span>
<span class="t" style="left:39.00px;top:488px;line-height:15px;font-family:'Liberation Sans', sans-serif;font-size:11px;font-weight:400;color:#000000;transform:scaleX(1.0504);transform-origin:0 50%;">Electronic CAM table</span>
</div>
<div style="left:1px;top:712.8px;width:155px;height:15px;background:#f0f0f0;"></div>
<div style="left:16.4px;top:713.2px;width:84.4px;height:13.4px;background:#cdcdcd;"></div>
<svg style="left:5px;top:715px" width="7" height="9" viewBox="0 0 7 9"><path d="M5.5 1.2L1.8 4.5L5.5 7.8" fill="none" stroke="#484848" stroke-width="1.9"/></svg>
<svg style="left:144px;top:715px" width="7" height="9" viewBox="0 0 7 9"><path d="M1.5 1.2L5.2 4.5L1.5 7.8" fill="none" stroke="#484848" stroke-width="1.9"/></svg>
<svg style="left:160px;top:104px" width="140" height="18" viewBox="0 0 140 18"><path d="M1.3 18 L1.3 16.9 L17 1.8 L131.6 1.8 L131.6 18 Z" fill="#ffffff"/></svg>
<span class="t" style="left:191.00px;top:106px;line-height:15px;font-family:'Liberation Sans', sans-serif;font-size:10.5px;font-weight:700;color:#101010;transform:scaleX(0.9495);transform-origin:0 50%;">Scanning MAIN*</span>
<svg style="left:280px;top:110px" width="8" height="8" viewBox="0 0 8 8"><path d="M0.8 0.8L7.2 7.2M7.2 0.8L0.8 7.2" stroke="#6a6a6a" stroke-width="1.2"/></svg>
<svg style="left:1281px;top:110px" width="10" height="6" viewBox="0 0 10 6"><path d="M0.5 0.5H9.5L5 5.5Z" fill="#ffffff"/></svg>
<div style="left:161.3px;top:121px;width:1134px;height:364.8px;background:#d6dbe9;"></div>
<div style="left:161.3px;top:121px;width:1134px;height:25.3px;background:#cfd6e5;"></div>
<svg style="left:170px;top:124px" width="14" height="14" viewBox="0 0 14 14"><circle cx="6.5" cy="7" r="5" fill="#eceef2" stroke="#c9ccd4" stroke-width="1.5"/></svg>
<div style="left:163.5px;top:146px;width:1114.5px;height:74.5px;background:#ffffff;"></div>
<div style="left:163.5px;top:146px;width:1114.5px;height:20.5px;background:#f0f0f0;border-bottom:1.5px solid #a9afbd;border-top:1px solid #bcc1ce;"></div>
<div style="left:163.5px;top:166px;width:16px;height:54.5px;background:#ececec;"></div>
<div style="left:908.7px;top:149px;width:1px;height:14px;background:#c4c4c4;"></div>
<span class="t" style="left:913.70px;top:149px;line-height:15px;font-family:'Liberation Sans', sans-serif;font-size:10.5px;font-weight:400;color:#1e1e1e;transform:scaleX(0.9953);transform-origin:0 50%;">Comment</span>
<div style="left:163.5px;top:185.2px;width:1114.5px;height:1px;background:#e4e4e4;"></div>
<div style="left:163.5px;top:203.2px;width:1114.5px;height:1px;background:#e4e4e4;"></div>
<div style="left:909.3px;top:166px;width:1px;height:54px;background:#e4e4e4;"></div>
<span class="t" style="left:172.30px;top:169px;line-height:15px;font-family:'Liberation Sans', sans-serif;font-size:10.5px;font-weight:400;color:#333333;">1</span>
<span class="t" style="left:172.30px;top:187px;line-height:15px;font-family:'Liberation Sans', sans-serif;font-size:10.5px;font-weight:400;color:#333333;">2</span>
<span class="t" style="left:172.30px;top:205px;line-height:15px;font-family:'Liberation Sans', sans-serif;font-size:10.5px;font-weight:400;color:#333333;">3</span>
<svg style="left:170px;top:156px" width="8" height="6" viewBox="0 0 8 6"><path d="M0 6H8V0Z" fill="#c4c4c4"/></svg>
<div style="left:1281.6px;top:161px;width:8.6px;height:41.5px;background:#b9bdc8;"></div>
<svg style="left:1281px;top:150px" width="9" height="6" viewBox="0 0 9 6"><path d="M0.5 5.5H8.5L4.5 0.8Z" fill="#6f7480"/></svg>
<svg style="left:1281px;top:210px" width="9" height="6" viewBox="0 0 9 6"><path d="M0.5 0.5H8.5L4.5 5.2Z" fill="#6f7480"/></svg>
<div style="left:180px;top:224.3px;width:911.8px;height:7.4px;background:#b9bdc8;"></div>
<svg style="left:167px;top:223px" width="6" height="9" viewBox="0 0 6 9"><path d="M5.5 0.5V8.5L0.8 4.5Z" fill="#6f7480"/></svg>
<svg style="left:1267px;top:223px" width="6" height="9" viewBox="0 0 6 9"><path d="M0.5 0.5V8.5L5.2 4.5Z" fill="#6f7480"/></svg>
<div style="left:161px;top:236px;width:1134px;height:5px;background:#dfe3ee;"></div>
<div style="left:163.5px;top:242px;width:1129.5px;height:242px;background:#ffffff;border:1px solid #9a9a9a;"></div>
<div style="left:164.5px;top:243px;width:1127.5px;height:14px;background:#e8ebf5;"></div>
<div style="left:164.5px;top:320px;width:1127.5px;height:1px;background:#d4d4d4;"></div>
<div style="left:173.4px;top:256.5px;width:6px;height:61.5px;background:#c6c6f7;"></div>
<svg style="left:168px;top:246px" width="10" height="6" viewBox="0 0 10 6"><path d="M0.5 0.5H9.5L5 5.5Z" fill="#111111"/></svg>
<div style="left:164.5px;top:467.5px;width:1127.5px;height:15.5px;background:#d6dbe9;"></div>
<div style="left:180px;top:472px;width:916.8px;height:6.5px;background:#b9bdc8;"></div>
<svg style="left:168px;top:470px" width="6" height="9" viewBox="0 0 6 9"><path d="M5.5 0.5V8.5L0.8 4.5Z" fill="#6f7480"/></svg>
<svg style="left:1281px;top:470px" width="6" height="9" viewBox="0 0 6 9"><path d="M0.5 0.5V8.5L5.2 4.5Z" fill="#6f7480"/></svg>
<div style="left:161px;top:490.5px;width:1134px;height:20px;background:#4d6082;"></div>
<span class="t" style="left:166.00px;top:493px;line-height:15px;font-family:'Liberation Sans', sans-serif;font-size:10.5px;font-weight:400;color:#ffffff;">Device usage list</span>
<svg style="left:1247px;top:498px" width="9" height="6" viewBox="0 0 9 6"><path d="M0.5 0.5H8.5L4.5 5Z" fill="#ffffff"/></svg>
<svg style="left:1264.5px;top:495.5px" width="8" height="9.6" viewBox="0 0 10 12"><path d="M3 1H7V6H3Z M1.5 6.5H8.5 M5 6.5V10.5 M6.2 1V6" fill="none" stroke="#ffffff" stroke-width="1.3"/></svg>
<svg style="left:1281px;top:497px" width="8" height="8" viewBox="0 0 8 8"><path d="M0.8 0.8L7.2 7.2M7.2 0.8L0.8 7.2" stroke="#ffffff" stroke-width="1.4"/></svg>
<div style="left:161px;top:510.5px;width:1134px;height:197px;background:#e8ebf4;"></div>
<div style="left:171.5px;top:524px;width:300px;height:64px;border:1px solid #c9ccd4;border-radius:4px;"></div>
<div style="left:600px;top:524px;width:325.5px;height:39.5px;border:1px solid #c9ccd4;border-radius:4px;"></div>
<span class="t" style="left:856.00px;top:532px;line-height:14px;font-family:'Liberation Mono','Noto Sans CJK SC',monospace;font-size:10px;font-weight:400;color:#222222;">Contact</span>
<span class="t" style="left:831.00px;top:573px;line-height:14px;font-family:'Liberation Mono','Noto Sans CJK SC',monospace;font-size:10px;font-weight:400;color:#222222;">Number of coil</span>
<div style="left:171.5px;top:595px;width:1114px;height:101.5px;background:#ffffff;border-top:1.5px solid #6e6e6e;border-left:1.5px solid #747474;border-bottom:1px solid #fbfbfb;border-right:1px solid #fbfbfb;"></div>
<div style="left:173px;top:628.3px;width:1096px;height:1px;background:#ececec;"></div>
<div style="left:173px;top:646.5px;width:1096px;height:1px;background:#ececec;"></div>
<div style="left:173px;top:664.6px;width:1096px;height:1px;background:#ececec;"></div>
<div style="left:173px;top:682.4px;width:1096px;height:1px;background:#ececec;"></div>
<div style="left:208px;top:628.8px;width:593.5px;height:17.7px;background:#99dcff;"></div>
<div style="left:208px;top:665.1px;width:593.5px;height:17.3px;background:#99dcff;"></div>
<div style="left:646px;top:629px;width:42px;height:17.5px;background:#0b72d4;"></div>
<div style="left:243.8px;top:596px;width:1px;height:87px;background:#e9e9e9;"></div>
<div style="left:351.5px;top:596px;width:1px;height:87px;background:#e9e9e9;"></div>
<div style="left:459.8px;top:596px;width:1px;height:87px;background:#e9e9e9;"></div>
<div style="left:531px;top:596px;width:1px;height:87px;background:#e9e9e9;"></div>
<div style="left:801.5px;top:596px;width:1px;height:87px;background:#e9e9e9;"></div>
<span class="t" style="left:210.80px;top:630px;line-height:16px;font-family:'Liberation Sans', sans-serif;font-size:11.5px;font-weight:400;color:#000000;">M0</span>
<span class="t" style="left:289.00px;top:630px;line-height:16px;font-family:'Liberation Sans', sans-serif;font-size:11.5px;font-weight:400;color:#000000;">LD</span>
<span class="t" style="left:388.60px;top:630px;line-height:16px;font-family:'Liberation Sans', sans-serif;font-size:11.5px;font-weight:400;color:#000000;">No.0-2</span>
<span class="t" style="left:480.00px;top:630px;line-height:16px;font-family:'Liberation Sans', sans-serif;font-size:11.5px;font-weight:400;color:#000000;">MAIN</span>
<span class="t" style="left:647.00px;top:630px;line-height:16px;font-family:'Liberation Sans', sans-serif;font-size:11.5px;font-weight:400;color:#0a0a20;transform:scaleX(0.9763);transform-origin:0 50%;">Contact</span>
<span class="t" style="left:193.40px;top:648px;line-height:16px;font-family:'Liberation Sans', sans-serif;font-size:11.5px;font-weight:400;color:#000000;transform:scaleX(0.9509);transform-origin:0 50%;">M1</span>
<span class="t" style="left:289.00px;top:648px;line-height:16px;font-family:'Liberation Sans', sans-serif;font-size:11.5px;font-weight:400;color:#000000;transform:scaleX(0.9444);transform-origin:0 50%;">*(1)</span>
<span class="t" style="left:210.80px;top:666px;line-height:16px;font-family:'Liberation Sans', sans-serif;font-size:11.5px;font-weight:400;color:#000000;transform:scaleX(0.9509);transform-origin:0 50%;">M1</span>
<span class="t" style="left:289.00px;top:666px;line-height:16px;font-family:'Liberation Sans', sans-serif;font-size:11.5px;font-weight:400;color:#000000;transform:scaleX(0.9271);transform-origin:0 50%;">LDI</span>
<span class="t" style="left:388.60px;top:666px;line-height:16px;font-family:'Liberation Sans', sans-serif;font-size:11.5px;font-weight:400;color:#000000;transform:scaleX(1.0107);transform-origin:0 50%;">No.0-3</span>
<span class="t" style="left:480.00px;top:666px;line-height:16px;font-family:'Liberation Sans', sans-serif;font-size:11.5px;font-weight:400;color:#000000;transform:scaleX(1.0678);transform-origin:0 50%;">MAIN</span>
<span class="t" style="left:647.00px;top:666px;line-height:16px;font-family:'Liberation Sans', sans-serif;font-size:11.5px;font-weight:400;color:#000000;transform:scaleX(0.9763);transform-origin:0 50%;">Contact</span>
<svg style="left:176px;top:640px" width="34" height="40" viewBox="0 0 34 40"><path d="M5.5 0V11" fill="none" stroke="#8a8a8a" stroke-width="1" stroke-dasharray="1 1"/><path d="M21.5 24V33.5H31" fill="none" stroke="#8a8a8a" stroke-width="1" stroke-dasharray="1 1"/><rect x="1.5" y="11.5" width="8" height="8" rx="1" fill="#fff" stroke="#8a8a8a"/><path d="M3.5 15.5H7.5" stroke="#333" stroke-width="1"/><path d="M11 15.5H16" stroke="#8a8a8a" stroke-dasharray="1 1"/></svg>
<div style="left:1270px;top:596px;width:14.5px;height:100px;background:#f0f0f0;"></div>
<div style="left:1270px;top:611.5px;width:14px;height:55.5px;background:#c8c8c8;"></div>
<svg style="left:1272px;top:600px" width="10" height="8" viewBox="0 0 10 8"><path d="M1.6 6.2L5 2.4L8.4 6.2" fill="none" stroke="#484848" stroke-width="1.9"/></svg>
<svg style="left:1272px;top:685px" width="10" height="8" viewBox="0 0 10 8"><path d="M1.6 1.8L5 5.6L8.4 1.8" fill="none" stroke="#484848" stroke-width="1.9"/></svg>
<div style="left:161.3px;top:707.5px;width:1134px;height:20.5px;background:#4d6082;"></div>
<div style="left:0px;top:727.8px;width:1295px;height:1.2px;background:#007acc;"></div>
<div style="left:480.3px;top:707.5px;width:101.4px;height:20.3px;background:#f5f7fc;"></div>
<svg style="left:167.4px;top:709.7px" width="10" height="13" viewBox="0 0 10 13"><rect x="0" y="0" width="10" height="13" fill="#ffffff"/><rect x="0" y="0" width="10" height="2" fill="#0f4a5c"/><path d="M1.5 4.5H8.5M1.5 6.5H8.5M1.5 8.5H8.5M1.5 10.5H8.5" stroke="#8d949e" stroke-width="1"/></svg>
<span class="t" style="left:181.10px;top:711px;line-height:14px;font-family:'Liberation Sans', sans-serif;font-size:10px;font-weight:400;color:#ffffff;transform:scaleX(1.1071);transform-origin:0 50%;-webkit-text-stroke:0.2px;">Information Output</span>
<svg style="left:285px;top:709.7px" width="10" height="13" viewBox="0 0 10 13"><rect x="0" y="0" width="10" height="13" fill="#ffffff"/><rect x="0" y="0" width="10" height="2" fill="#0f4a5c"/><path d="M1.5 4.5H8.5M1.5 6.5H8.5M1.5 8.5H8.5M1.5 10.5H8.5" stroke="#8d949e" stroke-width="1"/></svg>
<span class="t" style="left:299.00px;top:711px;line-height:14px;font-family:'Liberation Sans', sans-serif;font-size:10px;font-weight:400;color:#ffffff;transform:scaleX(0.9776);transform-origin:0 50%;-webkit-text-stroke:0.2px;">Search / Replace</span>
<svg style="left:386.3px;top:709.7px" width="10" height="13" viewBox="0 0 10 13"><rect x="0" y="0" width="10" height="13" fill="#ffffff"/><rect x="0" y="0" width="10" height="2" fill="#0f4a5c"/><path d="M1.5 4.5H8.5M1.5 6.5H8.5M1.5 8.5H8.5M1.5 10.5H8.5" stroke="#8d949e" stroke-width="1"/></svg>
<span class="t" style="left:400.00px;top:711px;line-height:14px;font-family:'Liberation Sans', sans-serif;font-size:10px;font-weight:400;color:#ffffff;transform:scaleX(0.9734);transform-origin:0 50%;-webkit-text-stroke:0.2px;">PLC Verify result</span>
<svg style="left:486px;top:709.7px" width="10" height="13" viewBox="0 0 10 13"><rect x="0" y="0" width="10" height="13" fill="#ffffff"/><rect x="0" y="0" width="10" height="2" fill="#0f4a5c"/><path d="M1.5 4.5H8.5M1.5 6.5H8.5M1.5 8.5H8.5M1.5 10.5H8.5" stroke="#8d949e" stroke-width="1"/></svg>
<span class="t" style="left:500.40px;top:711px;line-height:14px;font-family:'Liberation Sans', sans-serif;font-size:10px;font-weight:400;color:#1e5aa8;transform:scaleX(1.0041);transform-origin:0 50%;-webkit-text-stroke:0.2px;">Device usage list</span>
<svg style="left:588.4px;top:709.7px" width="10" height="13" viewBox="0 0 10 13"><rect x="0" y="0" width="10" height="13" fill="#ffffff"/><rect x="0" y="0" width="10" height="2" fill="#0f4a5c"/><path d="M1.5 4.5H8.5M1.5 6.5H8.5M1.5 8.5H8.5M1.5 10.5H8.5" stroke="#8d949e" stroke-width="1"/></svg>
<span class="t" style="left:603.00px;top:711px;line-height:14px;font-family:'Liberation Sans', sans-serif;font-size:10px;font-weight:400;color:#ffffff;transform:scaleX(0.9621);transform-origin:0 50%;-webkit-text-stroke:0.2px;">Progress</span>
<div style="left:178px;top:117px;width:704px;height:523px;background:#e8ebf4;border:1px solid #1f6db0;box-shadow:0 0 6px rgba(50,90,150,0.5);"></div>
<div style="left:179px;top:118px;width:702px;height:26.7px;background:#d6dbe9;"></div>
<span class="t" style="left:189.00px;top:127px;line-height:15px;font-family:'Liberation Sans', sans-serif;font-size:10.5px;font-weight:400;color:#1e1e1e;transform:scaleX(0.9892);transform-origin:0 50%;">EtherCAT configuration</span>
<svg style="left:861.5px;top:123.5px" width="8" height="8" viewBox="0 0 8 8"><path d="M0.8 0.8L7.2 7.2M7.2 0.8L0.8 7.2" stroke="#5a5a5a" stroke-width="1.2"/></svg>
<span class="t" style="left:193.60px;top:148px;line-height:16px;font-family:'Liberation Sans', sans-serif;font-size:11.5px;font-weight:400;color:#2b7bb9;transform:scaleX(1.0325);transform-origin:0 50%;">Master station settings</span>
<div style="left:188px;top:169px;width:682px;height:1px;background:#c9cdd8;"></div>
<div style="left:193px;top:167px;width:119.6px;height:3px;background:#0a84e4;"></div>
<div style="left:188px;top:170px;width:682px;height:432.3px;background:#f3f5fa;"></div>
<div style="left:190.5px;top:174px;width:676.5px;height:424px;background:#ffffff;border:1px solid #b9bdc9;"></div>
<div style="left:191.5px;top:175px;width:674.5px;height:21.5px;background:#e8ebf4;border-bottom:1px solid #c3c7d2;border-top:1px solid #f4f5f9"></div>
<div style="left:529.3px;top:175px;width:1px;height:422px;background:#c9ccd6;"></div>
<div style="left:529.3px;top:197.5px;width:1px;height:18.5px;background:#ffffff;"></div>
<span class="t" style="left:196.50px;top:179px;line-height:16px;font-family:'Liberation Sans', sans-serif;font-size:11.5px;font-weight:400;color:#1e1e1e;transform:scaleX(0.9909);transform-origin:0 50%;">Parameter</span>
<span class="t" style="left:534.20px;top:179px;line-height:16px;font-family:'Liberation Sans', sans-serif;font-size:11.5px;font-weight:400;color:#1e1e1e;transform:scaleX(0.9978);transform-origin:0 50%;">Value</span>
<div style="left:191.5px;top:216.2px;width:674.5px;height:1px;background:#d5d7de;"></div>
<div style="left:191.5px;top:234.9px;width:674.5px;height:1px;background:#d5d7de;"></div>
<div style="left:191.5px;top:253.5px;width:674.5px;height:1px;background:#d5d7de;"></div>
<div style="left:191.5px;top:272.2px;width:674.5px;height:1px;background:#d5d7de;"></div>
<div style="left:191.5px;top:290.8px;width:674.5px;height:1px;background:#d5d7de;"></div>
<svg style="left:199px;top:203px" width="6" height="6" viewBox="0 0 6 6"><path d="M5.5 0.5V5.5H0.5Z" fill="#9a9a9a"/></svg>
<span class="t" style="left:215.60px;top:198px;line-height:16px;font-family:'Liberation Sans', sans-serif;font-size:11.5px;font-weight:700;color:#000000;transform:scaleX(1.0086);transform-origin:0 50%;">Master station parameters</span>
<span class="t" style="left:215.60px;top:218px;line-height:16px;font-family:'Liberation Sans', sans-serif;font-size:11.5px;font-weight:400;color:#000000;transform:scaleX(0.9669);transform-origin:0 50%;">Sync unit cycle (us)</span>
<span class="t" style="left:215.60px;top:236px;line-height:16px;font-family:'Liberation Sans', sans-serif;font-size:11.5px;font-weight:400;color:#000000;transform:scaleX(1.0024);transform-origin:0 50%;">PreOP-&gt;OP timeout (100ms)</span>
<span class="t" style="left:215.60px;top:255px;line-height:16px;font-family:'Liberation Sans', sans-serif;font-size:11.5px;font-weight:400;color:#000000;transform:scaleX(1.0231);transform-origin:0 50%;">Automatic restart slave station</span>
<span class="t" style="left:215.60px;top:274px;line-height:16px;font-family:'Liberation Sans', sans-serif;font-size:11.5px;font-weight:400;color:#000000;transform:scaleX(0.9921);transform-origin:0 50%;">EtherCAT startup follows PLC RUN status</span>
<span class="t" style="left:533.20px;top:218px;line-height:16px;font-family:'Liberation Sans', sans-serif;font-size:11.5px;font-weight:400;color:#000000;transform:scaleX(1.0159);transform-origin:0 50%;">1000</span>
<span class="t" style="left:533.20px;top:236px;line-height:16px;font-family:'Liberation Sans', sans-serif;font-size:11.5px;font-weight:400;color:#000000;transform:scaleX(0.9990);transform-origin:0 50%;">0</span>
<span class="t" style="left:533.20px;top:255px;line-height:16px;font-family:'Liberation Sans', sans-serif;font-size:11.5px;font-weight:400;color:#000000;transform:scaleX(1.1222);transform-origin:0 50%;">No</span>
<span class="t" style="left:533.20px;top:274px;line-height:16px;font-family:'Liberation Sans', sans-serif;font-size:11.5px;font-weight:400;color:#000000;transform:scaleX(0.9645);transform-origin:0 50%;">Yes</span>
<div style="left:623.9px;top:607.6px;width:67.80000000000007px;height:20.6px;background:#d9ddea;border:1px solid #9aa2b5;"></div>
<span class="t" style="left:642.40px;top:611px;line-height:15px;font-family:'Liberation Sans', sans-serif;font-size:11px;font-weight:400;color:#1e1e1e;transform:scaleX(1.0036);transform-origin:0 50%;">Check</span>
<div style="left:704.8px;top:607.6px;width:67.80000000000007px;height:20.6px;background:#d9ddea;border:1.5px solid #2f78bd;"></div>
<span class="t" style="left:726.70px;top:611px;line-height:15px;font-family:'Liberation Sans', sans-serif;font-size:11px;font-weight:400;color:#1e1e1e;transform:scaleX(0.9530);transform-origin:0 50%;">Save</span>
<div style="left:795px;top:607.6px;width:67.5px;height:20.6px;background:#d9ddea;border:1px solid #9aa2b5;"></div>
<span class="t" style="left:814.30px;top:611px;line-height:15px;font-family:'Liberation Sans', sans-serif;font-size:11px;font-weight:400;color:#1e1e1e;transform:scaleX(1.0027);transform-origin:0 50%;">Close</span>
<div style="left:191px;top:195.8px;width:455px;height:98.7px;border:4px solid #17a0a0;border-radius:6px;"></div>
<div style="left:34.3px;top:574.8px;width:59px;height:23.8px;border:3.5px solid #17a0a0;border-radius:4.5px;"></div>
<svg style="left:0;top:0" width="1295" height="729" viewBox="0 0 1295 729"><path d="M92.8 574.5 L163.5 481.5" stroke="#17a0a0" stroke-width="3" fill="none"/><path d="M173.5 468.3 L156 476.6 L162.6 482.4 L166.8 488.2 Z" fill="#17a0a0"/><circle cx="104" cy="586" r="9.5" fill="#17a0a0"/><circle cx="376.6" cy="345.9" r="10.1" fill="#17a0a0"/></svg>
<span class="t" style="left:100.86px;top:578px;line-height:17px;font-family:'Liberation Sans', sans-serif;font-size:12px;font-weight:700;color:#ffffff;">1</span>
<span class="t" style="left:373.32px;top:338px;line-height:18px;font-family:'Liberation Sans', sans-serif;font-size:12.5px;font-weight:700;color:#ffffff;transform:scaleX(0.9);">2</span>
<span class="t" style="left:396.00px;top:336px;line-height:22px;font-family:'Liberation Sans', sans-serif;font-size:16px;font-weight:400;color:#36abab;transform:scaleX(1.0016);transform-origin:0 50%;">Configuration of the master</span>
<span class="t" style="left:114.80px;top:570px;line-height:21px;font-family:'Liberation Sans', sans-serif;font-size:15px;font-weight:400;color:#36abab;transform:scaleX(1.0221);transform-origin:0 50%;">Double</span>
<span class="t" style="left:124.00px;top:587px;line-height:21px;font-family:'Liberation Sans', sans-serif;font-size:15px;font-weight:400;color:#36abab;transform:scaleX(1.0352);transform-origin:0 50%;">click</span>
</body></html>
